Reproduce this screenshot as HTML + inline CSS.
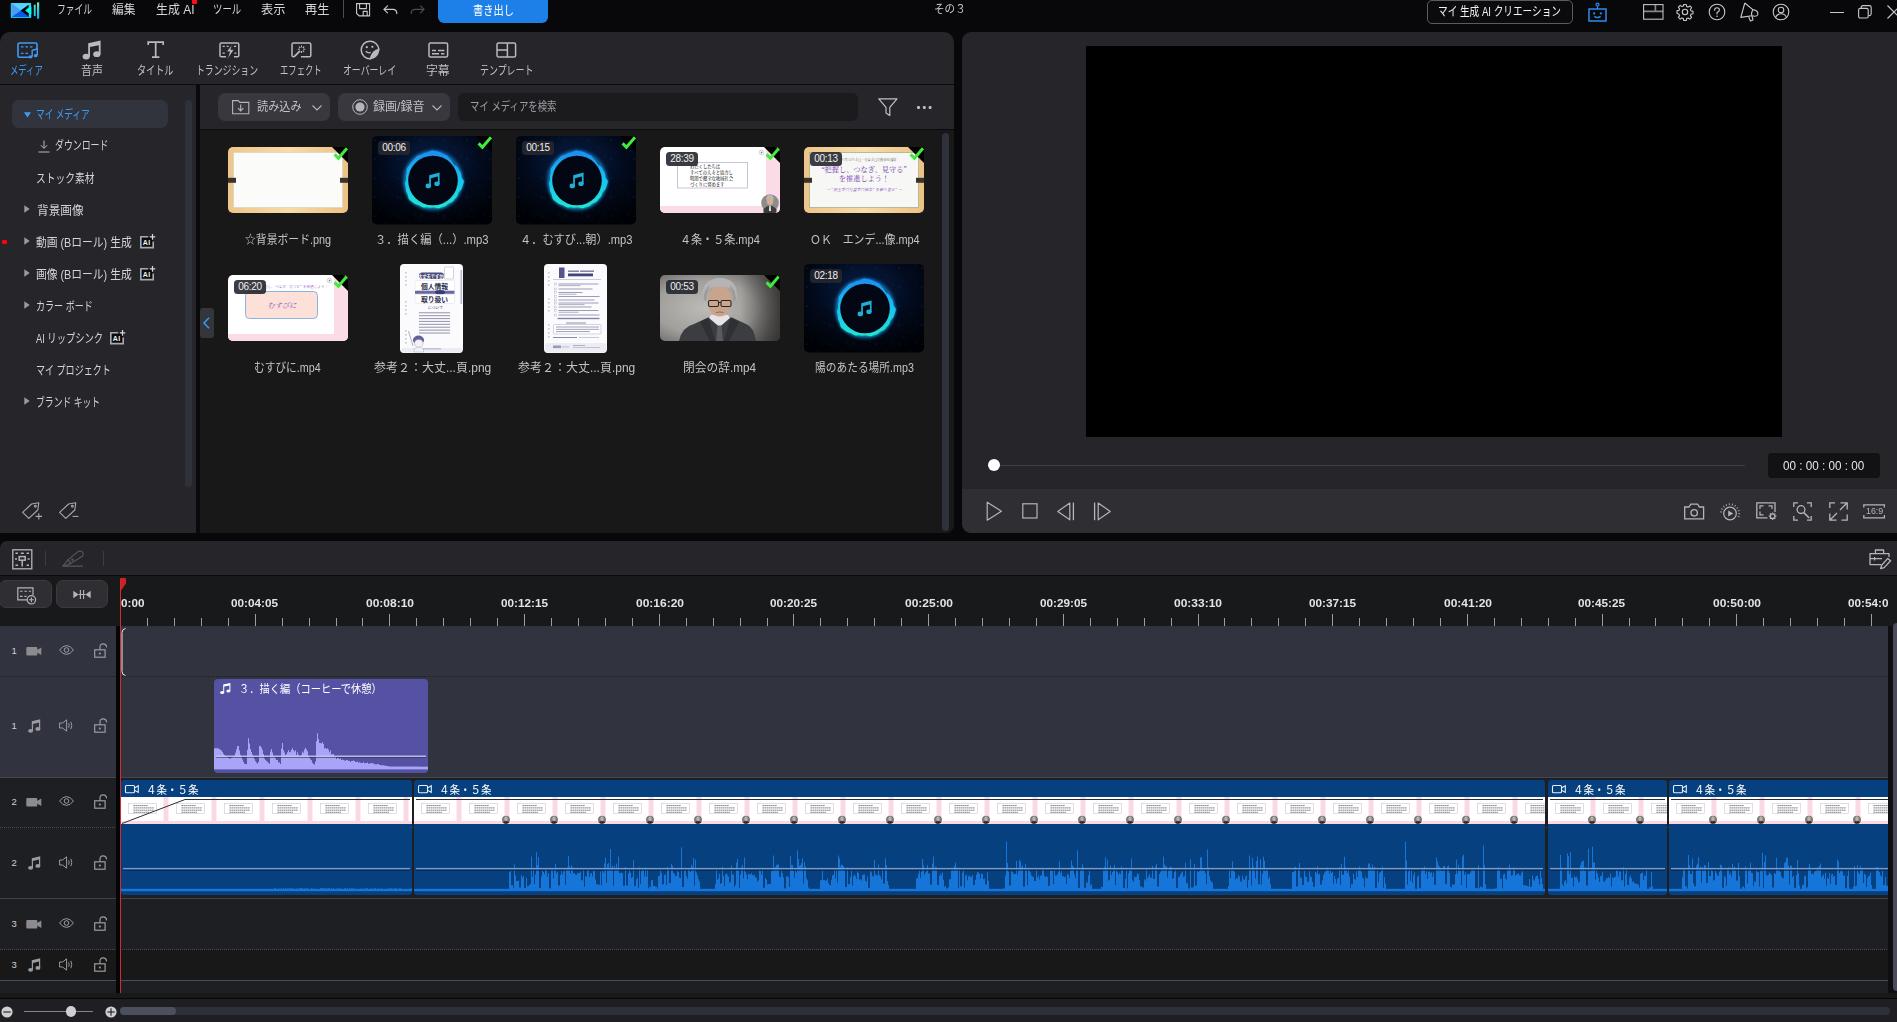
<!DOCTYPE html>
<html lang="ja">
<head>
<meta charset="utf-8">
<title>その3</title>
<style>
*{box-sizing:border-box;margin:0;padding:0}
html,body{width:1897px;height:1022px;overflow:hidden;background:#08080b}
body{font-family:"Liberation Sans","Noto Sans CJK JP",sans-serif;color:#d0d0d4;font-size:12px;position:relative}
.abs{position:absolute}
.t{position:absolute;white-space:nowrap;line-height:1;transform-origin:0 50%}
svg{position:absolute;overflow:visible}
/* ---------- top bar ---------- */
#top{position:absolute;left:0;top:0;width:1897px;height:32px;background:#08080b}
#top .m{position:absolute;top:3px;font-size:12.5px;color:#d6d6da;white-space:nowrap;line-height:14px;transform-origin:0 50%}
#export{position:absolute;left:438px;top:0;width:110px;height:23px;background:#1d80e8;border-radius:0 0 6px 6px;color:#fff;font-size:12.5px;text-align:center;line-height:21px}
#aibtn{position:absolute;left:1427px;top:0px;width:146px;height:24px;border:1px solid #5a5a60;border-radius:5px;background:#0b0b0d;color:#f0f0f2;font-size:12.5px;text-align:center;line-height:22px;white-space:nowrap}
/* ---------- left panel ---------- */
#lp{position:absolute;left:0;top:32px;width:954px;height:501px;background:#25252a;border-radius:10px 10px 8px 0;overflow:hidden}
#lp .hline{position:absolute;left:0;top:52px;width:954px;height:1px;background:#0b0b0d}
#side{position:absolute;left:0;top:53px;width:196px;height:448px;background:#25252a}
#gap{position:absolute;left:196px;top:53px;width:4px;height:448px;background:#0a0a0d}
#mtool{position:absolute;left:200px;top:53px;width:754px;height:44px;background:#25252a}
#mline{position:absolute;left:200px;top:97px;width:754px;height:1px;background:#0b0b0d}
#grid{position:absolute;left:200px;top:98px;width:754px;height:403px;background:#181818}
.tab{position:absolute;top:0;height:52px}
.tab .lb{position:absolute;top:32px;font-size:12px;color:#c9c9ce;white-space:nowrap;line-height:14px;transform-origin:50% 50%}
.si{position:absolute;font-size:12.5px;color:#d4d4d8;white-space:nowrap;line-height:16px;transform-origin:0 50%}
.btn{position:absolute;top:8px;height:28px;border-radius:7px;background:#38383e}
.cap{position:absolute;font-size:12px;color:#c4c4c9;white-space:nowrap;line-height:14px;text-align:center;width:144px}
.th{position:absolute;overflow:hidden}
.dur{position:absolute;height:14px;width:32px;border-radius:3.5px;background:rgba(38,39,45,.9);color:#f0f0f4;font-size:10px;line-height:14px;text-align:center;letter-spacing:-.3px}
/* ---------- right panel ---------- */
#rp{position:absolute;left:962px;top:32px;width:935px;height:501px;background:#25252a;border-radius:9px 0 0 9px;overflow:hidden}
#video{position:absolute;left:124px;top:14px;width:696px;height:391px;background:#000}
#ctl{position:absolute;left:0;top:457px;width:935px;height:44px;background:#2e2e33}
#tc{position:absolute;left:806px;top:421px;width:112px;height:25px;border-radius:4px;background:#121214;color:#e4e4e8;font-size:11.5px;text-align:center;line-height:25px}
/* ---------- timeline ---------- */
#tl{position:absolute;left:0;top:541px;width:1897px;height:481px;background:#18191a;border-radius:7px 0 0 0;overflow:hidden}
#tlbar{position:absolute;left:0;top:0;width:1897px;height:34px;background:#25252a}
#tlline{position:absolute;left:0;top:34px;width:1897px;height:1px;background:#0b0b0d}
.hb{position:absolute;top:39px;height:28px;border-radius:7px;background:#2e2e33;border:1px solid #3a3a40}
.rl{position:absolute;top:56px;font-size:11px;font-weight:bold;color:#e2e2e4;white-space:nowrap;line-height:12px;transform:translateX(-50%)}
.trk{position:absolute;left:0;width:1888px}
.hd{position:absolute;left:0;width:116px}
.num{position:absolute;left:11px;font-size:9.5px;color:#d8d8dc;line-height:10px}
</style>
</head>
<body>
<div id="top">
  <!-- logo -->
  <svg style="left:10px;top:2px" width="30" height="18" viewBox="0 0 30 18">
    <defs><linearGradient id="lg1" x1="0" y1="0" x2="0" y2="1"><stop offset="0" stop-color="#4ee8c0"/><stop offset="1" stop-color="#16c4f2"/></linearGradient>
    <linearGradient id="lg2" x1="0" y1="0" x2="0" y2="1"><stop offset="0" stop-color="#84eaa0"/><stop offset=".5" stop-color="#22cfd8"/><stop offset="1" stop-color="#18a4f2"/></linearGradient></defs>
    <rect x="0.800" y="1" width="20.300" height="14.900" fill="#22d8ec"/>
    <polygon points="1.600,1.600 20.600,1.600 11,8.600" fill="#58d2fb"/>
    <polygon points="1.600,1.600 11,8.600 1.600,15" fill="#469ff4"/>
    <polygon points="1.600,15 11,8.600 20.600,15" fill="#0557ee"/>
    <polygon points="10.600,8.600 18.600,2.800 18.600,5.600 15.200,8.600 19,11.600 19,14.800" fill="#030305"/>
    <polygon points="15.600,8.600 21.400,4.600 21.400,12.400" fill="#00fbf0"/>
    <polygon points="18.800,11.400 21.100,12.200 21.100,15.600 18.800,14.600" fill="#20e8e8"/>
    <rect x="23.800" y="2.700" width="1.900" height="11.400" fill="url(#lg1)"/>
    <rect x="27" y="0.400" width="2.200" height="16.300" fill="url(#lg2)"/>
  </svg>
  <span class="m" style="transform:scaleX(0.7010);left:57.30px">ファイル</span>
  <span class="m" style="transform:scaleX(0.9412);left:112.00px">編集</span>
  <span class="m" style="transform:scaleX(0.9545);left:156.00px">生成 AI</span>
  <div class="abs" style="left:192px;top:0;width:5px;height:4px;background:#ff0a18;border-radius:0 0 1px 1px"></div>
  <span class="m" style="transform:scaleX(0.7500);left:213.25px">ツール</span>
  <span class="m" style="transform:scaleX(0.9796);left:261.00px">表示</span>
  <span class="m" style="transform:scaleX(0.9796);left:305.00px">再生</span>
  <div class="abs" style="left:343px;top:0;width:1px;height:18px;background:#4a4a50"></div>
  <!-- save -->
  <svg style="left:356px;top:3px" width="15" height="14" viewBox="0 0 15 14" fill="none" stroke="#c8c8cc" stroke-width="1.1">
    <path d="M0.6 0.6H13.6V12.9H3.2L0.6 10.5Z"/>
    <path d="M3.6 0.6V5.6H10.4V0.6"/>
    <path d="M7.2 12.9V8.4H11.2V12.9"/>
  </svg>
  <!-- undo -->
  <svg style="left:383px;top:5px" width="15" height="10" viewBox="0 0 15 10" fill="none" stroke="#c8c8cc" stroke-width="1.2" stroke-linecap="round" stroke-linejoin="round">
    <path d="M4.5 0.8L1 4.3L4.5 7.8"/><path d="M1.2 4.3H10Q13.8 4.3 13.8 8.6"/>
  </svg>
  <!-- redo -->
  <svg style="left:410px;top:5px" width="15" height="10" viewBox="0 0 15 10" fill="none" stroke="#4c4c52" stroke-width="1.2" stroke-linecap="round" stroke-linejoin="round">
    <path d="M10.5 0.8L14 4.3L10.5 7.8"/><path d="M13.8 4.3H5Q1.2 4.3 1.2 8.6"/>
  </svg>
  <div id="export"><span class="t" style="transform:scaleX(0.8182);left:35.00px;top:5px;font-size:12.5px;color:#fff">書き出し</span></div>
  <span class="t" style="transform:scaleX(0.9194);left:934.08px;top:4px;font-size:11.5px;color:#c8c8cc">その３</span>
  <div id="aibtn"><span class="t" style="transform:scaleX(0.7710);left:10.23px;top:5px;font-size:12.5px;color:#f2f2f4">マイ 生成 AI クリエーション</span></div>
  <!-- robot -->
  <svg style="left:1588px;top:2px" width="20" height="20" viewBox="0 0 20 20" fill="none" stroke="#2a8cf0" stroke-width="1.500">
    <rect x="1" y="7" width="17" height="12"/>
    <circle cx="9.500" cy="2.600" r="1.500" stroke-width="1.200"/>
    <path d="M9.500 4.200V7" stroke-width="1.200"/>
    <circle cx="6.200" cy="11.400" r="1.100" fill="#2a8cf0" stroke="none"/><circle cx="12.800" cy="11.400" r="1.100" fill="#2a8cf0" stroke="none"/>
    <path d="M6.300 14.400Q9.500 16.600 12.700 14.400" stroke-width="1.300"/>
  </svg>
  <!-- layout -->
  <svg style="left:1643px;top:4px" width="21" height="16" viewBox="0 0 21 16" fill="none" stroke="#c0c0c4" stroke-width="1.100">
    <path d="M0.600 7.400H20M12.400 0.600V7.400" stroke="#85858a" stroke-width="1.700"/><rect x="0.600" y="0.600" width="19.400" height="14.600"/>
  </svg>
  <!-- gear -->
  <svg style="left:1676px;top:3px" width="18" height="18" viewBox="0 0 24 24" fill="none" stroke="#c8c8cc" stroke-width="1.5" stroke-linejoin="round">
    <circle cx="12" cy="12" r="3.6"/>
    <path d="M10.3 2h3.4l.5 2.7 1.9.8 2.3-1.6 2.4 2.4-1.6 2.3.8 1.9 2.7.5v3.4l-2.7.5-.8 1.9 1.6 2.3-2.4 2.4-2.3-1.6-1.9.8-.5 2.7h-3.4l-.5-2.7-1.9-.8-2.3 1.6-2.4-2.4 1.6-2.3-.8-1.9L1.3 13.700V10.300l2.700-.5.8-1.900-1.600-2.300 2.400-2.400 2.300 1.600 1.900-.8z"/>
  </svg>
  <!-- help -->
  <svg style="left:1708px;top:3px" width="18" height="18" viewBox="0 0 18 18" fill="none" stroke="#c8c8cc" stroke-width="1.1">
    <circle cx="9" cy="9" r="7.8"/><path d="M6.6 7.2Q6.6 4.8 9 4.8Q11.4 4.8 11.4 7Q11.4 8.4 9 9.6V11" stroke-linecap="round"/><circle cx="9" cy="13.2" r=".8" fill="#c8c8cc" stroke="none"/>
  </svg>
  <!-- megaphone -->
  <svg style="left:1740px;top:2px" width="20" height="20" viewBox="0 0 20 20" fill="none" stroke="#c8c8cc" stroke-width="1.100" stroke-linejoin="round">
    <path d="M4.800 1L0.800 15.400L11.800 13.800"/><path d="M4.800 1L12.800 7.600"/>
    <path d="M12.800 7.600Q18.600 8.400 17.800 12.600Q16.800 15 11.800 13.800Q11 10.600 12.800 7.600Z"/>
    <path d="M8.600 14.600L10.400 19L13 18L12 14"/>
  </svg>
  <!-- user -->
  <svg style="left:1772px;top:3px" width="18" height="18" viewBox="0 0 18 18" fill="none" stroke="#c8c8cc" stroke-width="1.1">
    <circle cx="9" cy="9" r="7.8"/><circle cx="9" cy="7" r="2.8"/><path d="M3.6 14.4Q5 10.8 9 10.8Q13 10.8 14.4 14.4"/>
  </svg>
  <div class="abs" style="left:1830px;top:11.5px;width:14px;height:1.3px;background:#c8c8cc"></div>
  <svg style="left:1858px;top:5px" width="14" height="14" viewBox="0 0 14 14" fill="none" stroke="#c8c8cc" stroke-width="1.1">
    <rect x="0.6" y="3.4" width="9.6" height="9.6" rx="1.6"/><path d="M3.2 3.2V2.4Q3.2 0.6 5 0.6H11.4Q13.2 0.6 13.2 2.4V8.8Q13.2 10.6 11.4 10.6H10.4"/>
  </svg>
  <svg style="left:1887px;top:5px" width="14" height="14" viewBox="0 0 14 14" fill="none" stroke="#c8c8cc" stroke-width="1.2"><path d="M0.5 0.5L13.5 13.5M13.5 0.5L0.5 13.5"/></svg>
</div>

<div id="lp">
  <!-- tabs -->
  <div class="tab" style="left:0;width:56px">
    <svg style="left:17px;top:10px" width="22" height="18" viewBox="0 0 22 18" fill="none" stroke="#3d9df6" stroke-width="1.6">
      <path d="M12 15.2H2.4Q1 15.2 1 13.8V2.400Q1 1 2.400 1H18.600Q20 1 20 2.400V7"/>
      <path d="M4 4.800H6.500M8.500 4.800H11M13 4.800H15.500M4 11.400H6.500M8.500 11.400H11" stroke-width="1.3"/>
      <path d="M15.200 14.500V8.200L20.300 7V13.300" stroke-width="1.4"/>
      <ellipse cx="13.600" cy="14.800" rx="1.900" ry="1.600" fill="#3d9df6" stroke="none"/><ellipse cx="18.700" cy="13.700" rx="1.900" ry="1.600" fill="#3d9df6" stroke="none"/>
    </svg>
    <span class="t" style="transform:scaleX(0.6957);left:10.30px;top:33px;font-size:12px;color:#3d9df6">メディア</span>
  </div>
  <div class="tab" style="left:64px;width:56px">
    <svg style="left:18px;top:8px" width="20" height="20" viewBox="0 0 20 20" fill="#b9b9c1">
      <path d="M6.200 3.200L18.600 0.600V14.200H16.800V5.200L8 7V16.600H6.200Z"/>
      <ellipse cx="4.200" cy="16.600" rx="3.600" ry="2.900"/><ellipse cx="14.800" cy="14.200" rx="3.600" ry="2.900"/>
    </svg>
    <span class="t" style="transform:scaleX(0.9167);left:17.00px;top:33px;font-size:12px;color:#c0c0c8">音声</span>
  </div>
  <div class="tab" style="left:128px;width:56px">
    <svg style="left:19px;top:9px" width="18" height="18" viewBox="0 0 18 18" fill="none" stroke="#b9b9c1" stroke-width="1.7">
      <path d="M1.200 4V1.200H16.200V4M8.700 1.200V16M5 16.200H12.400"/>
    </svg>
    <span class="t" style="transform:scaleX(0.7596);left:9.24px;top:33px;font-size:12px;color:#c0c0c8">タイトル</span>
  </div>
  <div class="tab" style="left:192px;width:72px">
    <svg style="left:27px;top:10px" width="21" height="17" viewBox="0 0 21 17" fill="none" stroke="#b9b9c1" stroke-width="1.5">
      <path d="M7 14.800H2.400Q1 14.800 1 13.400V2.400Q1 1 2.400 1H18.400Q19.800 1 19.800 2.400V13.400Q19.800 14.800 18.400 14.800H15"/>
      <path d="M3.600 4.300H5.800M7.600 4.300H9.600M15 4.300H17.200M3.600 11.200H5.800M15.400 11.200H17.400" stroke-width="1.200"/>
      <path d="M13.400 2L7.400 9.800H10.600L8 18L15.200 7.600H11.800Z" fill="#b9b9c1" stroke="#25252a" stroke-width=".8"/>
    </svg>
    <span class="t" style="transform:scaleX(0.7383);left:4.29px;top:33px;font-size:12px;color:#c0c0c8">トランジション</span>
  </div>
  <div class="tab" style="left:272px;width:60px">
    <svg style="left:19px;top:10px" width="21" height="17" viewBox="0 0 21 17" fill="none" stroke="#b9b9c1" stroke-width="1.5">
      <path d="M3 14.800H2.400Q1 14.800 1 13.400V2.400Q1 1 2.400 1H18.400Q19.800 1 19.800 2.400V13.400Q19.800 14.800 18.400 14.800H10"/>
      <path d="M3 14.800L9 8.800" stroke-width="1.800"/>
      <path d="M10.500 3.600V5.600M10.500 9V11M6.800 7.300H8.800M12.200 7.300H14.200M7.900 4.700L9.200 6M11.800 8.600L13.100 9.900M13.100 4.700L11.800 6" stroke-width="1.100"/>
    </svg>
    <span class="t" style="transform:scaleX(0.6948);left:8.01px;top:33px;font-size:12px;color:#c0c0c8">エフェクト</span>
  </div>
  <div class="tab" style="left:336px;width:66px">
    <svg style="left:24px;top:8px" width="20" height="20" viewBox="0 0 20 20" fill="none" stroke="#b9b9c1" stroke-width="1.5">
      <path d="M18.800 9.600A8.800 8.800 0 1 0 10.400 18.800"/>
      <path d="M18.800 9.600Q13 10.400 10.400 18.800Q17.600 17.600 18.800 9.600Z" fill="#b9b9c1"/>
      <circle cx="6.800" cy="7.200" r="1.100" fill="#b9b9c1" stroke="none"/><circle cx="12.400" cy="6.800" r="1.100" fill="#b9b9c1" stroke="none"/>
      <path d="M5.800 11.200Q8 13.600 10.800 12.400" stroke-width="1.300"/>
    </svg>
    <span class="t" style="transform:scaleX(0.7386);left:6.56px;top:33px;font-size:12px;color:#c0c0c8">オーバーレイ</span>
  </div>
  <div class="tab" style="left:410px;width:56px">
    <svg style="left:18px;top:10px" width="21" height="17" viewBox="0 0 21 17" fill="none" stroke="#b9b9c1" stroke-width="1.500">
      <rect x="1" y="1" width="18.600" height="14" rx="1.600"/>
      <path d="M4 8.600H8M10 8.600H16.400M4 11.800H11M13 11.800H16.400" stroke-width="1.500"/>
    </svg>
    <span class="t" style="transform:scaleX(0.9833);left:16.30px;top:33px;font-size:12px;color:#c0c0c8">字幕</span>
  </div>
  <div class="tab" style="left:474px;width:66px">
    <svg style="left:22px;top:10px" width="21" height="17" viewBox="0 0 21 17" fill="none" stroke="#b9b9c1" stroke-width="1.500">
      <rect x="1" y="1" width="18.600" height="14" rx="1.600"/><path d="M1 8H11.400M11.400 1V15"/>
    </svg>
    <span class="t" style="transform:scaleX(0.7457);left:5.55px;top:33px;font-size:12px;color:#c0c0c8">テンプレート</span>
  </div>
  <div class="hline"></div>
  <!-- sidebar -->
  <div id="side">
    <div class="abs" style="left:12px;top:15px;width:156px;height:28px;border-radius:7px;background:#32343d"></div>
    <svg style="left:23.500px;top:27px" width="7" height="6" viewBox="0 0 7 6"><path d="M0 0.300H7L3.500 5.600Z" fill="#3d9df6"/></svg>
    <span class="si" style="transform:scaleX(0.6924);left:35.61px;top:21.5px;color:#3d9df6">マイ メディア</span>
    <svg style="left:38px;top:55px" width="12" height="13" viewBox="0 0 12 13" fill="none" stroke="#b9b9c1" stroke-width="1"><path d="M6 0.500V8M2.800 5.200L6 8.400L9.200 5.200M0.500 12H11.500"/></svg>
    <span class="si" style="transform:scaleX(0.7116);left:55.40px;top:53px">ダウンロード</span>
    <span class="si" style="transform:scaleX(0.7796);left:35.52px;top:85.5px">ストック素材</span>
    <svg style="left:24px;top:120px" width="6" height="8" viewBox="0 0 6 8"><path d="M0.300 0.300L5.700 4L0.300 7.700Z" fill="#9a9aa2"/></svg>
    <span class="si" style="transform:scaleX(0.9307);left:36.60px;top:117.5px">背景画像</span>
    <div class="abs" style="left:2px;top:155px;width:4.500px;height:4px;background:#ff0010;border-radius:1px"></div>
    <svg style="left:24px;top:152px" width="6" height="8" viewBox="0 0 6 8"><path d="M0.300 0.300L5.700 4L0.300 7.700Z" fill="#9a9aa2"/></svg>
    <span class="si" style="transform:scaleX(0.8616);left:36.30px;top:149.5px">動画 (Bロール) 生成</span>
    <svg class="ai" style="left:140px;top:149px" width="16" height="15" viewBox="0 0 16 15" fill="none" stroke="#a9a9b1" stroke-width="1.600"><rect x="1.500" y="3.400" width="11.400" height="10" fill="#0b0b0d" stroke="none"/><path d="M8.200 2.800H0.800V13.600H13.200V7.600"/><path d="M12.500 0V5.800M9.800 2.900H15.200" stroke="#d8d8de" stroke-width="1.200"/></svg>
    <span class="t" style="left:142.800px;top:153.7px;font-size:7px;font-weight:bold;letter-spacing:.5px;color:#f0f0f4">AI</span>
    <svg style="left:24px;top:184px" width="6" height="8" viewBox="0 0 6 8"><path d="M0.300 0.300L5.700 4L0.300 7.700Z" fill="#9a9aa2"/></svg>
    <span class="si" style="transform:scaleX(0.8616);left:36.30px;top:181.5px">画像 (Bロール) 生成</span>
    <svg class="ai" style="left:140px;top:181px" width="16" height="15" viewBox="0 0 16 15" fill="none" stroke="#a9a9b1" stroke-width="1.600"><rect x="1.500" y="3.400" width="11.400" height="10" fill="#0b0b0d" stroke="none"/><path d="M8.200 2.800H0.800V13.600H13.200V7.600"/><path d="M12.500 0V5.800M9.800 2.900H15.200" stroke="#d8d8de" stroke-width="1.200"/></svg>
    <span class="t" style="left:142.800px;top:185.7px;font-size:7px;font-weight:bold;letter-spacing:.5px;color:#f0f0f4">AI</span>
    <svg style="left:24px;top:216px" width="6" height="8" viewBox="0 0 6 8"><path d="M0.300 0.300L5.700 4L0.300 7.700Z" fill="#9a9aa2"/></svg>
    <span class="si" style="transform:scaleX(0.7239);left:35.58px;top:213.5px">カラー ボード</span>
    <span class="si" style="transform:scaleX(0.7434);left:36.30px;top:245.5px">AI リップシンク</span>
    <svg class="ai" style="left:110px;top:245px" width="16" height="15" viewBox="0 0 16 15" fill="none" stroke="#a9a9b1" stroke-width="1.600"><rect x="1.500" y="3.400" width="11.400" height="10" fill="#0b0b0d" stroke="none"/><path d="M8.200 2.800H0.800V13.600H13.200V7.600"/><path d="M12.500 0V5.800M9.800 2.900H15.200" stroke="#d8d8de" stroke-width="1.200"/></svg>
    <span class="t" style="left:112.800px;top:249.7px;font-size:7px;font-weight:bold;letter-spacing:.5px;color:#f0f0f4">AI</span>
    <span class="si" style="transform:scaleX(0.7230);left:35.58px;top:277.5px">マイ プロジェクト</span>
    <svg style="left:24px;top:312px" width="6" height="8" viewBox="0 0 6 8"><path d="M0.300 0.300L5.700 4L0.300 7.700Z" fill="#9a9aa2"/></svg>
    <span class="si" style="transform:scaleX(0.7053);left:35.59px;top:309.5px">ブランド キット</span>
    <div class="abs" style="left:184.500px;top:15px;width:7px;height:387px;border-radius:4px;background:#2f313a"></div>
    <!-- tags -->
    <svg style="left:22px;top:417px" width="21" height="19" viewBox="0 0 21 19" fill="none" stroke="#a8a8b0" stroke-width="1.100" stroke-linejoin="round"><path d="M0.600 10.400L9.600 2L16.800 0.800L15.800 8L6.800 16.400Z"/><circle cx="13.400" cy="4.200" r="0.900"/><path d="M16.800 11.200V17.600M13.600 14.400H20"/></svg>
    <svg style="left:59px;top:417px" width="21" height="19" viewBox="0 0 21 19" fill="none" stroke="#a8a8b0" stroke-width="1.100" stroke-linejoin="round"><path d="M0.600 10.400L9.600 2L16.800 0.800L15.800 8L6.800 16.400Z"/><circle cx="13.400" cy="4.200" r="0.900"/><path d="M13.600 14.400H19.400"/></svg>
  </div>
  <div id="gap"></div>
  <!-- media toolbar -->
  <div id="mtool">
    <div class="btn" style="left:18px;width:112px">
      <svg style="left:13.500px;top:7px" width="18" height="15" viewBox="0 0 18 15" fill="none" stroke="#b4b4bc" stroke-width="1.100"><path d="M0.600 0.600H6.200L7.800 2.400H16.800V13.800H0.600Z"/><path d="M8.700 4.600V10.600M6 8.200L8.700 10.900L11.400 8.200"/></svg>
      <span class="t" style="transform:scaleX(0.9292);left:38.60px;top:8px;font-size:12px;color:#c0c0c8">読み込み</span>
      <svg style="left:93.500px;top:12px" width="10" height="6" viewBox="0 0 10 6" fill="none" stroke="#b4b4bc" stroke-width="1.100"><path d="M0.500 0.500L5 5L9.500 0.500"/></svg>
    </div>
    <div class="btn" style="left:138px;width:112px">
      <svg style="left:14px;top:6px" width="16" height="16" viewBox="0 0 16 16"><circle cx="8" cy="8" r="7.300" fill="none" stroke="#b4b4bc" stroke-width="1"/><circle cx="8" cy="8" r="4.600" fill="#b4b4bc"/></svg>
      <span class="t" style="transform:scaleX(1.0032);left:34.60px;top:8px;font-size:12px;color:#c0c0c8">録画/録音</span>
      <svg style="left:94px;top:12px" width="10" height="6" viewBox="0 0 10 6" fill="none" stroke="#b4b4bc" stroke-width="1.100"><path d="M0.500 0.500L5 5L9.500 0.500"/></svg>
    </div>
    <div class="abs" style="left:258px;top:8px;width:400px;height:28px;border-radius:6px;background:#1b1b1e">
      <span class="t" style="transform:scaleX(0.7822);left:11.62px;top:8px;font-size:12px;color:#9c9ca4">マイ メディアを検索</span>
    </div>
    <svg style="left:678px;top:13px" width="20" height="19" viewBox="0 0 20 19" fill="none" stroke="#c0c0c8" stroke-width="1.200" stroke-linejoin="round"><path d="M0.800 0.800H19L11.800 9.400V17.600L8 15V9.400Z"/></svg>
    <div class="abs" style="left:717px;top:21px;width:2.600px;height:2.600px;border-radius:50%;background:#c0c0c8;box-shadow:5.800px 0 0 #c0c0c8,11.600px 0 0 #c0c0c8"></div>
  </div>
  <div id="mline"></div>

  <div id="grid">
    <svg width="0" height="0" style="left:0;top:0">
      <defs>
        <radialGradient id="mbg" cx="50%" cy="30%" r="75%"><stop offset="0" stop-color="#06204a"/><stop offset=".55" stop-color="#020a1c"/><stop offset="1" stop-color="#000104"/></radialGradient>
        <linearGradient id="ring" x1="0" y1="0" x2="0" y2="1"><stop offset="0" stop-color="#1b8df2"/><stop offset=".5" stop-color="#19c3ee"/><stop offset="1" stop-color="#1fe6d6"/></linearGradient>
        <radialGradient id="ringglow" cx="50%" cy="50%" r="50%"><stop offset=".72" stop-color="#0b4a8c" stop-opacity="0"/><stop offset=".86" stop-color="#1590d8" stop-opacity=".55"/><stop offset="1" stop-color="#0b4a8c" stop-opacity="0"/></radialGradient>
        <pattern id="stars" width="23" height="19" patternUnits="userSpaceOnUse"><circle cx="3" cy="4" r=".5" fill="#1b5fa8"/><circle cx="14" cy="11" r=".45" fill="#17508e"/><circle cx="20" cy="2" r=".4" fill="#1a6ab0"/><circle cx="8" cy="16" r=".4" fill="#134680"/></pattern>
        <filter id="gl" x="-20%" y="-20%" width="140%" height="140%"><feGaussianBlur stdDeviation="1.6"/></filter>
        <g id="music">
          <rect width="120" height="88.500" rx="5" fill="url(#mbg)"/>
          <rect width="120" height="88" rx="5" fill="url(#stars)" opacity=".6"/>
          <circle cx="61" cy="44.500" r="33" fill="url(#ringglow)"/>
          <path d="M91.7 44.5 L91.7 46.6 L90.9 48.7 L90.2 50.7 L89.5 52.7 L88.2 54.4 L86.8 56.0 L86.0 57.8 L85.3 59.7 L84.2 61.4 L82.8 62.8 L81.6 64.4 L80.2 65.8 L78.4 66.7 L76.6 67.6 L75.0 68.8 L73.5 70.1 L71.6 70.8 L69.7 71.3 L67.8 71.9 L65.9 72.2 L63.9 71.8 L61.9 71.4 L60.1 71.6 L58.1 71.8 L56.2 71.6 L54.3 71.3 L52.3 71.4 L50.3 71.0 L48.6 69.9 L46.8 69.0 L44.8 68.5 L42.8 67.8 L41.1 66.6 L39.5 65.3 L37.7 64.0 L36.6 62.3 L36.1 60.1 L35.5 58.1 L34.7 56.2 L34.1 54.3 L34.0 52.2 L33.6 50.3 L33.1 48.4 L33.2 46.4 L33.9 44.5 L34.1 42.6 L34.0 40.7 L34.2 38.8 L34.7 36.9 L34.7 34.9 L34.9 32.9 L35.8 31.1 L37.2 29.6 L38.2 28.0 L39.3 26.3 L40.7 24.9 L42.2 23.6 L43.4 22.0 L44.8 20.5 L46.6 19.6 L48.6 19.0 L50.4 18.2 L52.2 17.3 L54.1 16.8 L56.0 16.3 L57.9 15.3 L60.0 14.6 L62.0 14.8 L64.1 15.3 L66.1 15.6 L68.0 16.2 L69.8 17.3 L71.6 18.3 L73.5 18.9 L75.2 19.8 L76.6 21.4 L77.8 23.0 L79.2 24.3 L80.3 25.9 L81.2 27.5 L82.5 28.9 L84.2 30.0 L85.6 31.4 L86.5 33.1 L87.5 34.8 L88.6 36.6 L89.1 38.5 L89.3 40.5 L89.9 42.5Z" fill="url(#ring)" filter="url(#gl)" opacity=".7"/><path d="M91.7 44.5 L91.7 46.6 L90.9 48.7 L90.2 50.7 L89.5 52.7 L88.2 54.4 L86.8 56.0 L86.0 57.8 L85.3 59.7 L84.2 61.4 L82.8 62.8 L81.6 64.4 L80.2 65.8 L78.4 66.7 L76.6 67.6 L75.0 68.8 L73.5 70.1 L71.6 70.8 L69.7 71.3 L67.8 71.9 L65.9 72.2 L63.9 71.8 L61.9 71.4 L60.1 71.6 L58.1 71.8 L56.2 71.6 L54.3 71.3 L52.3 71.4 L50.3 71.0 L48.6 69.9 L46.8 69.0 L44.8 68.5 L42.8 67.8 L41.1 66.6 L39.5 65.3 L37.7 64.0 L36.6 62.3 L36.1 60.1 L35.5 58.1 L34.7 56.2 L34.1 54.3 L34.0 52.2 L33.6 50.3 L33.1 48.4 L33.2 46.4 L33.9 44.5 L34.1 42.6 L34.0 40.7 L34.2 38.8 L34.7 36.9 L34.7 34.9 L34.9 32.9 L35.8 31.1 L37.2 29.6 L38.2 28.0 L39.3 26.3 L40.7 24.9 L42.2 23.6 L43.4 22.0 L44.8 20.5 L46.6 19.6 L48.6 19.0 L50.4 18.2 L52.2 17.3 L54.1 16.8 L56.0 16.3 L57.9 15.3 L60.0 14.6 L62.0 14.8 L64.1 15.3 L66.1 15.6 L68.0 16.2 L69.8 17.3 L71.6 18.3 L73.5 18.9 L75.2 19.8 L76.6 21.4 L77.8 23.0 L79.2 24.3 L80.3 25.9 L81.2 27.5 L82.5 28.9 L84.2 30.0 L85.6 31.4 L86.5 33.1 L87.5 34.8 L88.6 36.6 L89.1 38.5 L89.3 40.5 L89.9 42.5Z" fill="url(#ring)"/>
          <circle cx="61" cy="44.500" r="24.800" fill="#020713"/>
          <g fill="#1fb0d6"><path d="M57.200 39.200L67.600 36.600V47.800H65.900V40.500L58.900 42.200V50H57.200Z"/><ellipse cx="56.300" cy="49.900" rx="2.700" ry="2.300"/><ellipse cx="65" cy="47.700" rx="2.700" ry="2.300"/></g>
        </g>
        <g id="chk">
          <path d="M-1 0H15V16Z" fill="#000"/>
          <path d="M1.600 7.400L5.400 11.200L14 1.200" fill="none" stroke="#41ea3c" stroke-width="3"/>
        </g>
        <radialGradient id="manbg" cx="38%" cy="50%" r="75%"><stop offset="0" stop-color="#bcbbb8"/><stop offset=".55" stop-color="#a09f9c"/><stop offset="1" stop-color="#5a5957"/></radialGradient>
        <linearGradient id="mansh" x1="0" y1="0" x2="1" y2="0"><stop offset="0" stop-color="#2a2928" stop-opacity="0"/><stop offset="1" stop-color="#2a2928" stop-opacity=".75"/></linearGradient>
        <linearGradient id="wood" x1="0" y1="0" x2="1" y2="0"><stop offset="0" stop-color="#eec58a"/><stop offset=".5" stop-color="#f8dba8"/><stop offset="1" stop-color="#ecc184"/></linearGradient>
      </defs>
    </svg>
    <!-- ===== row 1 ===== -->
    <!-- 1 board -->
    <svg style="left:28px;top:17px" width="120" height="66" viewBox="0 0 120 66">
      <rect width="120" height="66" rx="5" fill="url(#wood)"/>
      <rect x="5.500" y="5.500" width="109" height="55" fill="#fbfbfa" stroke="#d9d8c4" stroke-width=".8"/>
      <rect x="0" y="30.800" width="8" height="5" fill="#3a332c"/><rect x="112" y="30.800" width="8" height="5" fill="#3a332c"/>
      <use href="#chk" x="105" y="0"/>
    </svg>
    <!-- 2,3 music -->
    <svg style="left:172px;top:6px" width="120" height="88.500" viewBox="0 0 120 88.500"><use href="#music"/><use href="#chk" x="105" y="0"/></svg>
    <div class="dur" style="left:178px;top:11px">00:06</div>
    <svg style="left:316px;top:6px" width="120" height="88.500" viewBox="0 0 120 88.500"><use href="#music"/><use href="#chk" x="105" y="0"/></svg>
    <div class="dur" style="left:322px;top:11px">00:15</div>
    <!-- 4 slide -->
    <svg style="left:460px;top:17px" width="120" height="66" viewBox="0 0 120 66" font-family="'Liberation Serif','Noto Serif CJK JP',serif">
      <clipPath id="c4"><rect width="120" height="66" rx="5"/></clipPath>
      <g clip-path="url(#c4)">
        <rect width="120" height="66" fill="#fff"/>
        <rect x="106" y="0" width="14" height="66" fill="#fbdce6"/><rect x="0" y="59" width="120" height="7" fill="#fbdce6"/>
        <rect x="17.500" y="15.500" width="70" height="25.500" fill="#fff" stroke="#b9a3cf" stroke-width=".7"/>
        <g font-size="4.300" fill="#2a2a2a" font-weight="600">
          <text x="30" y="20.800">わたくしたちは</text><text x="30" y="27">すべての人々と協力し</text><text x="30" y="33.200">明朗で健全な地域社会</text><text x="30" y="39.300">づくりに努めます</text>
        </g>
        <circle cx="101.500" cy="5.500" r="2.300" fill="none" stroke="#b8c6d8" stroke-width=".7"/><circle cx="101.500" cy="5.500" r=".9" fill="#8a8a92"/>
        <circle cx="110" cy="56" r="8.800" fill="#8d8c89"/>
        <path d="M103.500 62Q110 55 116.500 62V66H103.500Z" fill="#3b3c3f"/><ellipse cx="110" cy="54" rx="3.300" ry="4" fill="#d2ae97"/><path d="M106.200 53Q106 48 110 48Q114 48 113.800 53Q112 50.500 110 50.500Q108 50.500 106.200 53Z" fill="#b9b9b9"/><path d="M109.300 58.500H110.700L111 64H109Z" fill="#ececec"/>
        <use href="#chk" x="105" y="0"/>
      </g>
    </svg>
    <div class="dur" style="left:466px;top:22px">28:39</div>
    <!-- 5 board with text -->
    <svg style="left:604px;top:17px" width="120" height="66" viewBox="0 0 120 66" font-family="'Liberation Serif','Noto Serif CJK JP',serif">
      <rect width="120" height="66" rx="5" fill="url(#wood)"/>
      <rect x="5.500" y="5.500" width="109" height="55" fill="#f7f7f5" stroke="#9fb48a" stroke-width=".8"/>
      <rect x="0" y="30.800" width="8" height="5" fill="#3a332c"/><rect x="112" y="30.800" width="8" height="5" fill="#3a332c"/>
      <text x="60" y="13.500" font-size="3.200" fill="#555" text-anchor="middle">令和６年度 民生委員・児童委員活動強化週間</text>
      <text x="60" y="25.200" font-size="7.200" fill="#6f35ac" text-anchor="middle">“把握し、つなぎ、見守る”</text>
      <text x="60" y="34.200" font-size="7.200" fill="#6f35ac" text-anchor="middle">を推進しよう！</text>
      <text x="60" y="44.300" font-size="3.900" fill="#8045b8" text-anchor="middle" font-style="italic">～ “民生委員児童委員信条” を振り返る” ～</text>
      <use href="#chk" x="105" y="0"/>
    </svg>
    <div class="dur" style="left:610px;top:22px">00:13</div>
    <!-- captions row1 -->
    <span class="t" style="transform:scaleX(0.9030);left:45.40px;top:103.500px;font-size:12px;color:#c2c2c8">☆背景ボード.png</span>
    <span class="t" style="transform:scaleX(0.9411);left:175.42px;top:103.500px;font-size:12px;color:#c2c2c8">３．描く編（...）.mp3</span>
    <span class="t" style="transform:scaleX(0.9327);left:319.73px;top:103.500px;font-size:12px;color:#c2c2c8">４．むすび...朝）.mp3</span>
    <span class="t" style="transform:scaleX(0.9211);left:480.16px;top:103.500px;font-size:12px;color:#c2c2c8">４条・５条.mp4</span>
    <span class="t" style="transform:scaleX(0.9083);left:609.79px;top:103.500px;font-size:12px;color:#c2c2c8">ＯＫ　エンデ...像.mp4</span>
    <!-- ===== row 2 ===== -->
    <!-- 6 musubini -->
    <svg style="left:28px;top:145px" width="120" height="66" viewBox="0 0 120 66" font-family="'Liberation Serif','Noto Serif CJK JP',serif">
      <clipPath id="c6"><rect width="120" height="66" rx="5"/></clipPath>
      <g clip-path="url(#c6)">
        <rect width="120" height="66" fill="#fff"/>
        <rect x="106" y="0" width="14" height="66" fill="#fbdce6"/><rect x="0" y="59" width="120" height="7" fill="#fbdce6"/>
        <text x="65" y="12.500" font-size="3.600" fill="#8a50c0" text-anchor="middle" font-style="italic">“把握し、つなぎ、見守る” を推進しよう！</text>
        <rect x="17.500" y="16.500" width="72" height="27" rx="4" fill="#fde1d8" stroke="#6aa6e6" stroke-width=".8"/>
        <text x="54" y="32.800" font-size="7.200" fill="#8648bd" text-anchor="middle" font-style="italic">むすびに</text>
        <circle cx="101.500" cy="5.500" r="2.300" fill="none" stroke="#b8c6d8" stroke-width=".7"/><circle cx="101.500" cy="5.500" r=".9" fill="#8a8a92"/>
        <use href="#chk" x="105" y="0"/>
      </g>
    </svg>
    <div class="dur" style="left:34px;top:150px">06:20</div>
    <!-- 7 doc 1 -->
    <svg style="left:200px;top:134px" width="63" height="89" viewBox="0 0 63 89" font-family="'Liberation Sans','Noto Sans CJK JP',sans-serif">
      <rect width="63" height="89" rx="4" fill="#fbfbfd"/>
      <rect x="1" y="84" width="61" height="4.500" rx="2" fill="#ececf4"/>
      <rect x="60.500" y="6" width="1.600" height="34" fill="#b8b8cc"/>
      <g fill="#c4c4d2"><rect x="5" y="8" width="1.600" height="1.600"/><rect x="5" y="12" width="1.600" height="1.600"/><rect x="5" y="16" width="1.600" height="1.600"/><rect x="5" y="20" width="1.600" height="1.600"/><rect x="5" y="37" width="1.600" height="1.600"/><rect x="5" y="41" width="1.600" height="1.600"/><rect x="5" y="45" width="1.600" height="1.600"/><rect x="5" y="49" width="1.600" height="1.600"/><rect x="5" y="66" width="1.600" height="1.600"/><rect x="5" y="70" width="1.600" height="1.600"/><rect x="5" y="74" width="1.600" height="1.600"/><rect x="5" y="78" width="1.600" height="1.600"/></g>
      <rect x="19" y="8.500" width="25" height="6.500" rx="3.200" fill="#4a4a7c"/>
      <text x="31.500" y="13.600" font-size="4.200" font-weight="bold" fill="#fff" text-anchor="middle">大丈夫ですか!</text>
      <rect x="44.500" y="3" width="9" height="12" rx="1" fill="#fff" stroke="#a8a8c0" stroke-width=".5"/>
      <rect x="15" y="16.500" width="39.500" height="10" rx="1" fill="#fff" stroke="#dcdce8" stroke-width=".5"/>
      <text x="34.500" y="24.800" font-size="6.800" font-weight="bold" fill="#2c2c4e" text-anchor="middle">個人情報</text>
      <rect x="15" y="26.800" width="39.500" height="3" fill="#6868a4"/>
      <ellipse cx="40" cy="28.300" rx="5" ry="2.300" fill="#3c3c74"/>
      <rect x="15" y="30.500" width="39.500" height="9" rx="1" fill="#fff" stroke="#dcdce8" stroke-width=".5"/>
      <text x="34.500" y="37.800" font-size="6.800" font-weight="bold" fill="#2c2c4e" text-anchor="middle">取り扱い</text>
      <text x="35.500" y="45" font-size="3.800" fill="#3c3c5c" text-anchor="middle">について</text>
      <g fill="#9c9cb4"><rect x="19" y="48.2" width="31" height="1.100"/><rect x="19" y="51.1" width="31" height="1.100"/><rect x="19" y="54.0" width="31" height="1.100"/><rect x="19" y="56.9" width="31" height="1.100"/><rect x="19" y="59.8" width="31" height="1.100"/><rect x="19" y="62.7" width="31" height="1.100"/><rect x="19" y="65.6" width="31" height="1.100"/><rect x="19" y="68.5" width="31" height="1.100"/></g>
      <path d="M8.500 67L13 82" stroke="#7878a0" stroke-width=".6"/>
      <ellipse cx="18.500" cy="76" rx="5.600" ry="4.400" fill="#62629a"/><ellipse cx="18.800" cy="79.300" rx="4.200" ry="3.800" fill="#f6f2f4" stroke="#8a8ab0" stroke-width=".4"/><path d="M14 84.500Q18.800 82 23.500 84.500V88H14Z" fill="#f2f2f8" stroke="#9a9ab8" stroke-width=".4"/>
      <rect x="23" y="84.500" width="18" height=".8" fill="#9a9ab8"/>
    </svg>
    <!-- 8 doc 2 -->
    <svg style="left:344px;top:134px" width="63" height="89" viewBox="0 0 63 89">
      <rect width="63" height="89" rx="4" fill="#fbfbfd"/>
      <rect x="1" y="79" width="61" height="9.500" rx="2" fill="#ececf4"/>
      <rect x="15" y="3.500" width="5.500" height="10.500" fill="#55558c"/>
      <rect x="24" y="6.500" width="11" height="1.400" fill="#77779c"/><rect x="36" y="6.500" width="14" height="1.400" fill="#77779c"/>
      <rect x="24" y="9.500" width="25" height="2.800" fill="#44447a"/>
      <rect x="9" y="15.200" width="48" height=".5" fill="#9a9ab4"/>
      <g fill="#c4c4d2"><rect x="4" y="8" width="1.600" height="1.600"/><rect x="4" y="12" width="1.600" height="1.600"/><rect x="4" y="16" width="1.600" height="1.600"/><rect x="4" y="20" width="1.600" height="1.600"/><rect x="4" y="34" width="1.600" height="1.600"/><rect x="4" y="38" width="1.600" height="1.600"/><rect x="4" y="42" width="1.600" height="1.600"/><rect x="4" y="46" width="1.600" height="1.600"/><rect x="4" y="60" width="1.600" height="1.600"/><rect x="4" y="64" width="1.600" height="1.600"/><rect x="4" y="68" width="1.600" height="1.600"/><rect x="4" y="72" width="1.600" height="1.600"/></g>
      <g fill="none" stroke="#a8a8c0" stroke-width=".4"><rect x="10.500" y="19" width="2" height="2"/><rect x="10.500" y="24" width="2" height="2"/><rect x="10.500" y="27.500" width="2" height="2"/><rect x="10.500" y="31.500" width="2" height="2"/><rect x="10.500" y="35" width="2" height="2"/><rect x="10.500" y="38" width="2" height="2"/><rect x="10.500" y="42" width="2" height="2"/><rect x="10.500" y="45.500" width="2" height="2"/><rect x="10.500" y="50" width="2" height="2"/></g>
      <g fill="#9c9cb6"><rect x="14.500" y="19.500" width="40" height="1"/><rect x="14.500" y="21.300" width="22" height=".8"/><rect x="14.500" y="24.500" width="34" height="1"/><rect x="14.500" y="28" width="24" height="1"/><rect x="14.500" y="29.800" width="18" height=".8"/><rect x="14.500" y="32" width="41" height="1"/><rect x="14.500" y="35.500" width="36" height="1"/><rect x="14.500" y="38.500" width="40" height="1"/><rect x="14.500" y="40.300" width="26" height=".8"/><rect x="14.500" y="42.500" width="33" height="1"/><rect x="14.500" y="46" width="40" height="1"/><rect x="14.500" y="47.800" width="20" height=".8"/><rect x="14.500" y="50.500" width="41" height="1"/></g>
      <rect x="13.500" y="53.800" width="42" height="1.400" fill="#8484a4"/>
      <rect x="22" y="58.500" width="20" height="1" fill="#9090ac"/>
      <rect x="9.500" y="60.500" width="47.500" height="9.500" rx="1" fill="#fff" stroke="#a4a4c4" stroke-width=".5"/>
      <g fill="#a0a0b8"><rect x="12" y="62.500" width="43" height="1"/><rect x="12" y="64.800" width="43" height="1"/><rect x="12" y="67.100" width="34" height="1"/></g>
      <rect x="9" y="73" width="24" height="1" fill="#8a8aa6"/><rect x="35" y="73" width="20" height=".7" fill="#b0b0c4"/>
      <rect x="9" y="81.500" width="8" height="2.600" fill="#9a9ab6"/><rect x="18" y="82.500" width="7" height=".8" fill="#b0b0c4"/><rect x="29" y="81" width="12" height="1" fill="#b0b0c4"/><rect x="29" y="83" width="27" height=".8" fill="#b8b8cc"/>
    </svg>
    <!-- 9 man -->
    <svg style="left:460px;top:145px" width="120" height="66" viewBox="0 0 120 66">
      <clipPath id="c9"><rect width="120" height="66" rx="5"/></clipPath>
      <g clip-path="url(#c9)">
        <rect width="120" height="66" fill="url(#manbg)"/>
        <rect x="80" y="0" width="40" height="66" fill="url(#mansh)"/>
        <path d="M19 66Q22 52 34 49L48 42.500H72L86 49Q94 52 96 66Z" fill="#3c3d40"/>
        <path d="M49 43L59.500 52L70 43L68 40H51Z" fill="#e6e4e6"/>
        <path d="M57.500 50.500H61.500L63 66H56Z" fill="#5a5a64"/>
        <path d="M48.500 43L55 66H50L40 47Z" fill="#2f3033"/><path d="M70.500 43L64 66H69L79 47Z" fill="#2f3033"/>
        <ellipse cx="59.700" cy="26" rx="12" ry="15.500" fill="#c9a48c"/>
        <path d="M43 26Q40 9 52 4.500Q60 1 68 4.500Q79 9 76.500 26Q75 17 70 13Q60 10 50 13Q45 17 43 26Z" fill="#b4b4b4"/>
        <path d="M43.500 24Q44 14 50 10Q46 18 46.500 27Z" fill="#9c9c9c"/><path d="M76 24Q75.500 14 69.500 10Q73.500 18 73 27Z" fill="#9c9c9c"/>
        <rect x="48.500" y="25.500" width="10" height="6" rx="1.400" fill="#caa890" stroke="#2a2422" stroke-width="1.100"/><rect x="61" y="25.500" width="10" height="6" rx="1.400" fill="#caa890" stroke="#2a2422" stroke-width="1.100"/><path d="M58.500 27.500H61" stroke="#2a2422" stroke-width="1"/>
        <path d="M56 37.500Q59.700 36.500 63.500 37.500" stroke="#8c6254" stroke-width=".9" fill="none"/>
        <use href="#chk" x="105" y="0"/>
      </g>
    </svg>
    <div class="dur" style="left:466px;top:150px">00:53</div>
    <!-- 10 music -->
    <svg style="left:604px;top:134px" width="120" height="88.500" viewBox="0 0 120 88.500"><use href="#music"/></svg>
    <div class="dur" style="left:610px;top:139px">02:18</div>
    <!-- captions row2 -->
    <span class="t" style="transform:scaleX(0.8918);left:53.81px;top:231.500px;font-size:12px;color:#c2c2c8">むすびに.mp4</span>
    <span class="t" style="transform:scaleX(0.9993);left:173.60px;top:231.500px;font-size:12px;color:#c2c2c8">参考２：大丈...頁.png</span>
    <span class="t" style="transform:scaleX(0.9993);left:317.60px;top:231.500px;font-size:12px;color:#c2c2c8">参考２：大丈...頁.png</span>
    <span class="t" style="transform:scaleX(0.9770);left:483.02px;top:231.500px;font-size:12px;color:#c2c2c8">閉会の辞.mp4</span>
    <span class="t" style="transform:scaleX(0.8937);left:614.80px;top:231.500px;font-size:12px;color:#c2c2c8">陽のあたる場所.mp3</span>
    <!-- collapse handle -->
    <div class="abs" style="left:0;top:178px;width:14px;height:30px;border-radius:3px;background:#35363c"></div>
    <svg style="left:3px;top:187px" width="7" height="12" viewBox="0 0 7 12" fill="none" stroke="#3d9df6" stroke-width="1.400"><path d="M6 0.800L1 6L6 11.200"/></svg>
    <!-- scrollbar -->
    <div class="abs" style="left:742.300px;top:3px;width:7.200px;height:398px;border-radius:4px;background:#2e303a"></div>
  </div>
</div>

<div id="rp">
  <div id="video"></div>
  <div class="abs" style="left:32px;top:432.500px;width:751px;height:1.200px;background:#3b3e45"></div>
  <div class="abs" style="left:26px;top:427px;width:12px;height:12px;border-radius:50%;background:#fff"></div>
  <div id="tc"><span class="t" style="transform:scaleX(0.9746);left:15.00px;top:6.500px;font-size:12px;color:#e6e6ea">00 : 00 : 00 : 00</span></div>
  <div id="ctl">
        <svg style="left:24px;top:12px" width="17" height="21" viewBox="0 0 17 21" fill="none" stroke="#b4b4bc" stroke-width="1.200" stroke-linejoin="round"><path d="M1.200 1.200L15.400 10.200L1.200 19.200Z"/></svg>
    <svg style="left:60px;top:14px" width="16" height="16" viewBox="0 0 16 16" fill="none" stroke="#b4b4bc" stroke-width="1.200"><rect x="0.800" y="0.800" width="14.200" height="14.200"/></svg>
    <svg style="left:95px;top:13px" width="18" height="19" viewBox="0 0 18 19" fill="none" stroke="#b4b4bc" stroke-width="1.200" stroke-linejoin="round"><path d="M12.800 1L0.800 9.400L12.800 17.800Z"/><path d="M16.400 0.600V18.200" stroke-width="1.300"/></svg>
    <svg style="left:131px;top:13px" width="18" height="19" viewBox="0 0 18 19" fill="none" stroke="#b4b4bc" stroke-width="1.200" stroke-linejoin="round"><path d="M5.200 1L17.200 9.400L5.200 17.800Z"/><path d="M1.600 0.600V18.200" stroke-width="1.300"/></svg>
    <!-- camera -->
    <svg style="left:722px;top:14px" width="21" height="18" viewBox="0 0 21 18" fill="none" stroke="#b4b4bc" stroke-width="1.300"><path d="M0.700 4H5L6.800 1.200H13.600L15.400 4H19.600V15.800H0.700Z"/><circle cx="10.200" cy="9.800" r="3.200"/></svg>
    <!-- render preview -->
    <svg style="left:757px;top:12px" width="24" height="22" viewBox="0 0 24 22" fill="none" stroke="#b4b4bc" stroke-width="1.200"><circle cx="11" cy="12.500" r="6.300"/><path d="M9.200 9.500L14.200 12.500L9.200 15.500Z" fill="#b4b4bc" stroke="none"/><path d="M2.9 11.1L1.0 10.7M3.8 8.5L2.1 7.6M5.5 6.4L4.2 4.9M7.8 5.0L7.0 3.1M10.4 4.3L10.3 2.3M13.1 4.6L13.6 2.6M15.6 5.7L16.7 4.0M17.5 7.6L19.1 6.4M18.8 10.0L20.7 9.3M19.2 12.6L21.2 12.7M18.7 15.3L20.6 16.0" stroke-width="1.100" opacity=".75"/></svg>
    <!-- preview settings -->
    <svg style="left:794px;top:13px" width="22" height="19" viewBox="0 0 22 19" fill="none" stroke="#b4b4bc" stroke-width="1.300"><path d="M11.500 15.800H0.800V0.800H19V10"/><path d="M4 7V3.800H7.500M12.500 3.800H16V7M4 9.500V12.800H7.500" stroke-width="1.200"/><circle cx="16.600" cy="14.200" r="2.300"/><path d="M16.600 10.400V11.600M16.600 16.800V18M12.800 14.200H14M19.200 14.200H20.400M13.900 11.500L14.800 12.400M18.400 16L19.300 16.900M19.300 11.500L18.400 12.400M14.800 16L13.900 16.900" stroke-width="1.200"/></svg>
    <!-- zoom -->
    <svg style="left:831px;top:13px" width="20" height="20" viewBox="0 0 20 20" fill="none" stroke="#b4b4bc" stroke-width="1.300"><path d="M0.800 5V0.800H5M14 0.800H18.200V5M0.800 14V18.200H5M14 18.200H18.200V14"/><circle cx="8" cy="7.600" r="3.900"/><path d="M10.800 10.600L16.200 16" stroke-width="1.500"/></svg>
    <!-- fullscreen -->
    <svg style="left:867px;top:13px" width="20" height="20" viewBox="0 0 20 20" fill="none" stroke="#b4b4bc" stroke-width="1.300"><path d="M0.800 6V0.800H6M12.500 18.200H18.200V12.500"/><path d="M11.500 0.800H18.200V7.500M18 1L11 8" /><path d="M0.800 11.500V18.200H7.500M1 18L8 11"/></svg>
    <!-- 16:9 -->
    <svg style="left:901px;top:15px" width="23" height="16" viewBox="0 0 23 16" fill="none" stroke="#b4b4bc" stroke-width="1.300"><path d="M0.800 3.400V0.800H21.400V3.400M0.800 11V13.800H21.400V11"/></svg>
    <span class="t" style="transform:scaleX(1.0407);left:904.00px;top:18px;font-size:8.500px;color:#b4b4bc">16:9</span>
  </div>
</div>

<div id="tl">
<div id="tlbar">
<svg style="left:12px;top:8px" width="21" height="21" viewBox="0 0 21 21" fill="none" stroke="#b4b4bc" stroke-width="1.300"><rect x="0.800" y="0.800" width="19" height="19"/><path d="M3.500 4.200H6M8.800 4.200H11.800M14.600 4.200H17M3.500 16.200H6M14.600 16.200H17M3 10H5M15.600 10H17.600" stroke-width="1.400"/><rect x="7.200" y="7.600" width="6" height="3.600" stroke-width="1.500"/><path d="M10.200 11.400V17.500" stroke-width="1.500"/></svg>
<div class="abs" style="left:45px;top:10px;width:1px;height:15px;background:#3c3c42"></div>
<svg style="left:62px;top:9px" width="23" height="18" viewBox="0 0 23 18" fill="none" stroke="#55555c" stroke-width="1.200" stroke-linejoin="round"><path d="M8.600 13.600L6.200 9.600L16.400 1.400Q19.400 0.200 21 2.800Q21.800 5 20 6.600Z"/><path d="M8.600 13.600L0.800 16.200H21" /><path d="M6.200 9.600L0.800 16.200" /><circle cx="10.400" cy="9.800" r=".7"/></svg>
<div class="abs" style="left:103px;top:10px;width:1px;height:15px;background:#3c3c42"></div>
<svg style="left:1869px;top:8px" width="23" height="21" viewBox="0 0 23 21" fill="none" stroke="#b4b4bc" stroke-width="1.300" stroke-linejoin="round"><path d="M12 15.600H1V4.600H20V8"/><path d="M6.400 4.600V1H14.600V4.600"/><path d="M1 9.600H13M5.600 8V11.400" stroke-width="1.200"/><path d="M11.600 19.600L12.600 16.200L18.800 9.400L21.600 11.800L15.200 18.600Z" fill="#26262b"/></svg>
</div><div id="tlline"></div>
<div class="hb" style="left:-1px;width:53px"></div><div class="hb" style="left:56px;width:52px"></div>
<svg style="left:17px;top:46px" width="20" height="18" viewBox="0 0 20 18" fill="none" stroke="#b4b4bc" stroke-width="1.200"><path d="M10 12.800H0.800V0.800H16V8"/><path d="M3 4.200H5.600M7.400 4.200H10M11.800 4.200H14M3 9.400H5.600M7.400 9.400H9.600" stroke-width="1.100"/><circle cx="14.400" cy="12.800" r="4.200"/><path d="M14.400 10.400V15.200M12 12.800H16.800" stroke-width="1.100"/></svg>
<svg style="left:73px;top:49px" width="18" height="9" viewBox="0 0 18 9" fill="#b4b4bc" stroke="#b4b4bc"><path d="M0.300 0.800L5.600 4.500L0.300 8.200Z" stroke="none"/><path d="M17.700 0.800L12.400 4.500L17.700 8.200Z" stroke="none"/><path d="M5.600 4.500H12.400" stroke-width="1"/><path d="M7.400 0V9M10.600 0V9" stroke-width="1.100"/></svg>
<svg style="left:0;top:0" width="1888" height="86"><path d="M147.5 77V85M174.5 77V85M201.5 77V85M228.5 77V85M255.5 73V85M282.5 77V85M309.5 77V85M336.5 77V85M362.5 77V85M389.5 73V85M416.5 77V85M443.5 77V85M470.5 77V85M497.5 77V85M524.5 73V85M551.5 77V85M578.5 77V85M605.5 77V85M632.5 77V85M659.5 73V85M686.5 77V85M713.5 77V85M740.5 77V85M767.5 77V85M793.5 73V85M820.5 77V85M847.5 77V85M874.5 77V85M901.5 77V85M928.5 73V85M955.5 77V85M982.5 77V85M1009.5 77V85M1036.5 77V85M1063.5 73V85M1090.5 77V85M1117.5 77V85M1144.5 77V85M1171.5 77V85M1198.5 73V85M1224.5 77V85M1251.5 77V85M1278.5 77V85M1305.5 77V85M1332.5 73V85M1359.5 77V85M1386.5 77V85M1413.5 77V85M1440.5 77V85M1467.5 73V85M1494.5 77V85M1521.5 77V85M1548.5 77V85M1575.5 77V85M1602.5 73V85M1629.5 77V85M1655.5 77V85M1682.5 77V85M1709.5 77V85M1736.5 73V85M1763.5 77V85M1790.5 77V85M1817.5 77V85M1844.5 77V85M1871.5 73V85" stroke="#9a9cab" stroke-width="1" fill="none"/></svg>
<div class="abs" style="left:0;top:35px;width:1888px;height:50px;overflow:hidden">
<span class="t" style="transform:scaleX(1.0168);left:120.50px;top:21.500px;font-size:11.500px;font-weight:bold;color:#e4e4e6">0:00</span>
<span class="t" style="transform:scaleX(1.0206);left:231.40px;top:21.500px;font-size:11.500px;font-weight:bold;color:#e4e4e6">00:04:05</span>
<span class="t" style="transform:scaleX(1.0430);left:366.10px;top:21.500px;font-size:11.500px;font-weight:bold;color:#e4e4e6">00:08:10</span>
<span class="t" style="transform:scaleX(1.0206);left:500.80px;top:21.500px;font-size:11.500px;font-weight:bold;color:#e4e4e6">00:12:15</span>
<span class="t" style="transform:scaleX(1.0430);left:635.50px;top:21.500px;font-size:11.500px;font-weight:bold;color:#e4e4e6">00:16:20</span>
<span class="t" style="transform:scaleX(1.0206);left:770.20px;top:21.500px;font-size:11.500px;font-weight:bold;color:#e4e4e6">00:20:25</span>
<span class="t" style="transform:scaleX(1.0430);left:904.80px;top:21.500px;font-size:11.500px;font-weight:bold;color:#e4e4e6">00:25:00</span>
<span class="t" style="transform:scaleX(1.0206);left:1039.50px;top:21.500px;font-size:11.500px;font-weight:bold;color:#e4e4e6">00:29:05</span>
<span class="t" style="transform:scaleX(1.0430);left:1174.20px;top:21.500px;font-size:11.500px;font-weight:bold;color:#e4e4e6">00:33:10</span>
<span class="t" style="transform:scaleX(1.0206);left:1308.90px;top:21.500px;font-size:11.500px;font-weight:bold;color:#e4e4e6">00:37:15</span>
<span class="t" style="transform:scaleX(1.0430);left:1443.60px;top:21.500px;font-size:11.500px;font-weight:bold;color:#e4e4e6">00:41:20</span>
<span class="t" style="transform:scaleX(1.0206);left:1578.30px;top:21.500px;font-size:11.500px;font-weight:bold;color:#e4e4e6">00:45:25</span>
<span class="t" style="transform:scaleX(1.0430);left:1713.00px;top:21.500px;font-size:11.500px;font-weight:bold;color:#e4e4e6">00:50:00</span>
<span class="t" style="transform:scaleX(1.0206);left:1847.70px;top:21.500px;font-size:11.500px;font-weight:bold;color:#e4e4e6">00:54:05</span>
</div>
<div class="abs" style="left:0;top:85px;width:1888px;height:50px;background:#31343e"></div>
<div class="abs" style="left:0;top:135px;width:1888px;height:1px;background:repeating-linear-gradient(90deg,#1c1d22 0 1px,#31343e 1px 2px)"></div>
<div class="abs" style="left:0;top:136px;width:1888px;height:100px;background:#31343e"></div>
<div class="abs" style="left:0;top:236px;width:1888px;height:1px;background:#44464f"></div>
<div class="abs" style="left:0;top:237px;width:1888px;height:49px;background:#1e1f23"></div>
<div class="abs" style="left:0;top:286px;width:1888px;height:1px;background:repeating-linear-gradient(90deg,#484a53 0 1px,#1e1f23 1px 2px)"></div>
<div class="abs" style="left:0;top:287px;width:1888px;height:70px;background:#1e1f23"></div>
<div class="abs" style="left:0;top:357px;width:1888px;height:1px;background:#40424b"></div>
<div class="abs" style="left:0;top:358px;width:1888px;height:50px;background:#1e1f23"></div>
<div class="abs" style="left:0;top:408px;width:1888px;height:1px;background:repeating-linear-gradient(90deg,#484a53 0 1px,#1e1f23 1px 2px)"></div>
<div class="abs" style="left:0;top:409px;width:1888px;height:30px;background:#181818"></div>
<div class="abs" style="left:0;top:439px;width:1888px;height:1px;background:#4a4d58"></div>
<div class="abs" style="left:0;top:440px;width:1888px;height:12px;background:#1e1f23"></div>
<div class="abs" style="left:116px;top:85px;width:4px;height:367px;background:#060608"></div>
<span class="t" style="left:11.500px;top:104.5px;font-size:9.500px;color:#d0d0d6">1</span>
<svg style="left:26px;top:106px" width="16" height="9" viewBox="0 0 16 9" fill="#8c8c90"><rect x="0.300" y="0" width="11" height="8.600" rx="1"/><path d="M11 3L15.300 0.600V8L11 5.600Z"/></svg>
<svg style="left:59px;top:104px" width="15" height="10" viewBox="0 0 15 10" fill="none" stroke="#9c9ca0" stroke-width="1"><path d="M0.600 5Q3.600 0.600 7.500 0.600Q11.400 0.600 14.400 5Q11.400 9.400 7.500 9.400Q3.600 9.400 0.600 5Z"/><circle cx="7.500" cy="5" r="2.300"/></svg>
<svg style="left:94px;top:102px" width="14" height="15" viewBox="0 0 14 15" fill="none" stroke="#9c9ca0" stroke-width="1.200"><rect x="0.700" y="6.800" width="10.400" height="7.400"/><path d="M6 6.800V3.800Q6 0.800 9 0.800Q12.400 0.800 12.600 4.400"/><rect x="4.900" y="9.600" width="1.800" height="1.800" fill="#9c9ca0" stroke="none"/></svg>
<span class="t" style="left:11.500px;top:179.5px;font-size:9.500px;color:#d0d0d6">1</span>
<svg style="left:28px;top:178px" width="13" height="14" viewBox="0 0 13 14" fill="#9c9ca0"><path d="M3.800 2.200L12.200 0.200V10H11V3.600L5 5V12H3.800Z"/><ellipse cx="2.600" cy="11.800" rx="2.500" ry="1.900"/><ellipse cx="9.900" cy="9.900" rx="2.500" ry="1.900"/></svg>
<svg style="left:59px;top:178px" width="15" height="13" viewBox="0 0 15 13" fill="none" stroke="#9c9ca0" stroke-width="1"><path d="M0.600 4H3.600L7.600 0.800V12.200L3.600 9H0.600Z"/><path d="M9.600 4.400Q10.800 6.500 9.600 8.600M11.800 2.800Q13.800 6.500 11.800 10.200"/></svg>
<svg style="left:94px;top:177px" width="14" height="15" viewBox="0 0 14 15" fill="none" stroke="#9c9ca0" stroke-width="1.200"><rect x="0.700" y="6.800" width="10.400" height="7.400"/><path d="M6 6.800V3.800Q6 0.800 9 0.800Q12.400 0.800 12.600 4.400"/><rect x="4.900" y="9.600" width="1.800" height="1.800" fill="#9c9ca0" stroke="none"/></svg>
<span class="t" style="left:11.500px;top:255.5px;font-size:9.500px;color:#d0d0d6">2</span>
<svg style="left:26px;top:257px" width="16" height="9" viewBox="0 0 16 9" fill="#8c8c90"><rect x="0.300" y="0" width="11" height="8.600" rx="1"/><path d="M11 3L15.300 0.600V8L11 5.600Z"/></svg>
<svg style="left:59px;top:255px" width="15" height="10" viewBox="0 0 15 10" fill="none" stroke="#9c9ca0" stroke-width="1"><path d="M0.600 5Q3.600 0.600 7.500 0.600Q11.400 0.600 14.400 5Q11.400 9.400 7.500 9.400Q3.600 9.400 0.600 5Z"/><circle cx="7.500" cy="5" r="2.300"/></svg>
<svg style="left:94px;top:253px" width="14" height="15" viewBox="0 0 14 15" fill="none" stroke="#9c9ca0" stroke-width="1.200"><rect x="0.700" y="6.800" width="10.400" height="7.400"/><path d="M6 6.800V3.800Q6 0.800 9 0.800Q12.400 0.800 12.600 4.400"/><rect x="4.900" y="9.600" width="1.800" height="1.800" fill="#9c9ca0" stroke="none"/></svg>
<span class="t" style="left:11.500px;top:316.5px;font-size:9.500px;color:#d0d0d6">2</span>
<svg style="left:28px;top:315px" width="13" height="14" viewBox="0 0 13 14" fill="#9c9ca0"><path d="M3.800 2.200L12.200 0.200V10H11V3.600L5 5V12H3.800Z"/><ellipse cx="2.600" cy="11.800" rx="2.500" ry="1.900"/><ellipse cx="9.900" cy="9.900" rx="2.500" ry="1.900"/></svg>
<svg style="left:59px;top:315px" width="15" height="13" viewBox="0 0 15 13" fill="none" stroke="#9c9ca0" stroke-width="1"><path d="M0.600 4H3.600L7.600 0.800V12.200L3.600 9H0.600Z"/><path d="M9.600 4.400Q10.800 6.500 9.600 8.600M11.800 2.800Q13.800 6.500 11.800 10.200"/></svg>
<svg style="left:94px;top:314px" width="14" height="15" viewBox="0 0 14 15" fill="none" stroke="#9c9ca0" stroke-width="1.200"><rect x="0.700" y="6.800" width="10.400" height="7.400"/><path d="M6 6.800V3.800Q6 0.800 9 0.800Q12.400 0.800 12.600 4.400"/><rect x="4.900" y="9.600" width="1.800" height="1.800" fill="#9c9ca0" stroke="none"/></svg>
<span class="t" style="left:11.500px;top:377.5px;font-size:9.500px;color:#d0d0d6">3</span>
<svg style="left:26px;top:379px" width="16" height="9" viewBox="0 0 16 9" fill="#8c8c90"><rect x="0.300" y="0" width="11" height="8.600" rx="1"/><path d="M11 3L15.300 0.600V8L11 5.600Z"/></svg>
<svg style="left:59px;top:377px" width="15" height="10" viewBox="0 0 15 10" fill="none" stroke="#9c9ca0" stroke-width="1"><path d="M0.600 5Q3.600 0.600 7.500 0.600Q11.400 0.600 14.400 5Q11.400 9.400 7.500 9.400Q3.600 9.400 0.600 5Z"/><circle cx="7.500" cy="5" r="2.300"/></svg>
<svg style="left:94px;top:375px" width="14" height="15" viewBox="0 0 14 15" fill="none" stroke="#9c9ca0" stroke-width="1.200"><rect x="0.700" y="6.800" width="10.400" height="7.400"/><path d="M6 6.800V3.800Q6 0.800 9 0.800Q12.400 0.800 12.600 4.400"/><rect x="4.900" y="9.600" width="1.800" height="1.800" fill="#9c9ca0" stroke="none"/></svg>
<span class="t" style="left:11.500px;top:418.5px;font-size:9.500px;color:#d0d0d6">3</span>
<svg style="left:28px;top:417px" width="13" height="14" viewBox="0 0 13 14" fill="#9c9ca0"><path d="M3.800 2.200L12.200 0.200V10H11V3.600L5 5V12H3.800Z"/><ellipse cx="2.600" cy="11.800" rx="2.500" ry="1.900"/><ellipse cx="9.900" cy="9.900" rx="2.500" ry="1.900"/></svg>
<svg style="left:59px;top:417px" width="15" height="13" viewBox="0 0 15 13" fill="none" stroke="#9c9ca0" stroke-width="1"><path d="M0.600 4H3.600L7.600 0.800V12.200L3.600 9H0.600Z"/><path d="M9.600 4.400Q10.800 6.500 9.600 8.600M11.800 2.800Q13.800 6.500 11.800 10.200"/></svg>
<svg style="left:94px;top:416px" width="14" height="15" viewBox="0 0 14 15" fill="none" stroke="#9c9ca0" stroke-width="1.200"><rect x="0.700" y="6.800" width="10.400" height="7.400"/><path d="M6 6.800V3.800Q6 0.800 9 0.800Q12.400 0.800 12.600 4.400"/><rect x="4.900" y="9.600" width="1.800" height="1.800" fill="#9c9ca0" stroke="none"/></svg>
<svg style="left:121px;top:87px" width="6" height="48" viewBox="0 0 6 48" fill="none" stroke="#e8e8ec" stroke-width="1"><path d="M4.500 0.500Q1 1 1 4.500V43.500Q1 47 4.500 47.500"/></svg>
<div class="abs" style="left:214px;top:138px;width:214px;height:94px;background:#5552a4;border-radius:4px;overflow:hidden">
<svg style="left:0;top:0" width="214" height="94"><path d="M0 90.2L0 69.2L1 69.2L1 69.2L2 69.2L2 69.2L3 69.2L3 69.2L4 69.2L4 69.6L5 69.6L5 70.2L6 70.2L6 70.8L7 70.8L7 71.4L8 71.4L8 73.0L9 73.0L9 74.7L10 74.7L10 76.1L11 76.1L11 76.8L12 76.8L12 77.5L13 77.5L13 78.2L14 78.2L14 78.9L15 78.9L15 79.6L16 79.6L16 79.6L17 79.6L17 78.9L18 78.9L18 78.1L19 78.1L19 77.4L20 77.4L20 76.6L21 76.6L21 73.8L22 73.8L22 70.3L23 70.3L23 66.9L24 66.9L24 67.1L25 67.1L25 71.6L26 71.6L26 75.7L27 75.7L27 78.1L28 78.1L28 80.5L29 80.5L29 82.9L30 82.9L30 84.8L31 84.8L31 85.0L32 85.0L32 85.2L33 85.2L33 70.8L34 70.8L34 59.2L35 59.2L35 64.5L36 64.5L36 69.9L37 69.9L37 73.1L38 73.1L38 75.4L39 75.4L39 77.7L40 77.7L40 79.9L41 79.9L41 82.2L42 82.2L42 83.6L43 83.6L43 84.7L44 84.7L44 82.9L45 82.9L45 66.8L46 66.8L46 67.3L47 67.3L47 68.5L48 68.5L48 70.9L49 70.9L49 75.1L50 75.1L50 79.4L51 79.4L51 80.9L52 80.9L52 81.9L53 81.9L53 82.8L54 82.8L54 83.7L55 83.7L55 84.7L56 84.7L56 72.4L57 72.4L57 69.9L58 69.9L58 73.6L59 73.6L59 76.7L60 76.7L60 77.9L61 77.9L61 79.5L62 79.5L62 81.0L63 81.0L63 81.0L64 81.0L64 83.2L65 83.2L65 83.5L66 83.5L66 84.9L67 84.9L67 69.4L68 69.4L68 64.1L69 64.1L69 71.1L70 71.1L70 73.6L71 73.6L71 76.0L72 76.0L72 75.3L73 75.3L73 73.3L74 73.3L74 70.9L75 70.9L75 73.3L76 73.3L76 72.7L77 72.7L77 70.8L78 70.8L78 69.2L79 69.2L79 70.9L80 70.9L80 72.5L81 72.5L81 71.3L82 71.3L82 76.0L83 76.0L83 73.3L84 73.3L84 75.8L85 75.8L85 76.7L86 76.7L86 77.2L87 77.2L87 75.8L88 75.8L88 72.4L89 72.4L89 73.7L90 73.7L90 70.5L91 70.5L91 68.8L92 68.8L92 70.4L93 70.4L93 72.2L94 72.2L94 76.7L95 76.7L95 78.9L96 78.9L96 80.3L97 80.3L97 81.2L98 81.2L98 83.7L99 83.7L99 85.0L100 85.0L100 85.6L101 85.6L101 82.6L102 82.6L102 62.3L103 62.3L103 54.2L104 54.2L104 60.0L105 60.0L105 63.9L106 63.9L106 63.9L107 63.9L107 64.6L108 64.6L108 62.9L109 62.9L109 65.1L110 65.1L110 69.3L111 69.3L111 69.0L112 69.0L112 70.0L113 70.0L113 69.2L114 69.2L114 70.6L115 70.6L115 73.3L116 73.3L116 71.2L117 71.2L117 75.5L118 75.5L118 75.2L119 75.2L119 75.0L120 75.0L120 78.0L121 78.0L121 77.9L122 77.9L122 80.1L123 80.1L123 79.0L124 79.0L124 79.1L125 79.1L125 79.9L126 79.9L126 79.5L127 79.5L127 81.1L128 81.1L128 80.6L129 80.6L129 81.1L130 81.1L130 81.5L131 81.5L131 81.8L132 81.8L132 81.1L133 81.1L133 81.0L134 81.0L134 82.1L135 82.1L135 81.8L136 81.8L136 83.1L137 83.1L137 81.9L138 81.9L138 82.1L139 82.1L139 81.6L140 81.6L140 82.0L141 82.0L141 83.1L142 83.1L142 83.0L143 83.0L143 82.6L144 82.6L144 83.8L145 83.8L145 83.2L146 83.2L146 83.8L147 83.8L147 84.0L148 84.0L148 84.1L149 84.1L149 83.1L150 83.1L150 84.2L151 84.2L151 84.2L152 84.2L152 84.1L153 84.1L153 83.5L154 83.5L154 84.8L155 84.8L155 84.4L156 84.4L156 84.4L157 84.4L157 84.1L158 84.1L158 84.3L159 84.3L159 84.4L160 84.4L160 85.3L161 85.3L161 85.2L162 85.2L162 85.4L163 85.4L163 84.9L164 84.9L164 85.0L165 85.0L165 86.0L166 86.0L166 86.1L167 86.1L167 86.2L168 86.2L168 86.3L169 86.3L169 86.3L170 86.3L170 86.5L171 86.5L171 86.7L172 86.7L172 86.9L173 86.9L173 87.1L174 87.1L174 87.4L175 87.4L175 87.6L176 87.6L176 87.7L177 87.7L177 87.7L178 87.7L178 87.7L179 87.7L179 87.7L180 87.7L180 87.7L181 87.7L181 87.7L182 87.7L182 87.7L183 87.7L183 87.7L184 87.7L184 87.7L185 87.7L185 87.7L186 87.7L186 87.8L187 87.8L187 87.8L188 87.8L188 87.8L189 87.8L189 87.8L190 87.8L190 87.8L191 87.8L191 87.8L192 87.8L192 87.8L193 87.8L193 87.8L194 87.8L194 87.8L195 87.8L195 87.8L196 87.8L196 87.8L197 87.8L197 87.8L198 87.8L198 87.8L199 87.8L199 87.8L200 87.8L200 87.8L201 87.8L201 87.8L202 87.8L202 87.8L203 87.8L203 87.8L204 87.8L204 87.8L205 87.8L205 87.9L206 87.9L206 87.9L207 87.9L207 87.9L208 87.9L208 87.9L209 87.9L209 87.9L210 87.9L210 87.9L211 87.9L211 87.9L212 87.9L212 87.9L213 87.9L213 87.9L214 87.9L214 90.2Z" fill="#a8a4f8"/><rect x="0" y="87.700" width="214" height="2.500" fill="#a8a4f8"/><rect x="2" y="76.500" width="210" height="1.500" fill="#c6c4e4" opacity=".9"/><rect x="2" y="78" width="210" height=".8" fill="#2e2c58" opacity=".7"/></svg>
<svg style="left:6px;top:4px" width="11" height="11" viewBox="0 0 11 11" fill="#fff"><path d="M3.200 1.400L10.400 0V8H9.400V2.600L4.200 3.600V9.800H3.200Z"/><ellipse cx="2.200" cy="9.600" rx="2" ry="1.500"/><ellipse cx="8.400" cy="8" rx="2" ry="1.500"/></svg>
<span class="t" style="transform:scaleX(0.8911);left:25.02px;top:5px;font-size:11.500px;color:#fff">３．描く編（コーヒーで休憩）</span>
</div>
<svg width="0" height="0" style="left:0;top:0"><defs>
<pattern id="thm" y="17" width="48" height="27" patternUnits="userSpaceOnUse"><rect width="48" height="27" fill="#fff"/><rect x="42.500" y="0" width="5" height="27" fill="#fbd9e4"/><rect x="0" y="24" width="48" height="3" fill="#fbd9e4"/><rect x="7.500" y="6.500" width="28" height="10" fill="#fff" stroke="#cfc6dc" stroke-width=".6"/><path d="M12.500 8.600H27M12.500 10.900H33M12.500 13.200H33M12.500 15.300H28" stroke="#55555c" stroke-width=".9" stroke-dasharray="1.300 .7"/></pattern>
<g id="av"><circle r="4" fill="#7c7a78"/><path d="M-3.200 2.600Q0 -0.500 3.200 2.600Q1.500 4 0 4Q-1.500 4 -3.200 2.600Z" fill="#2c2d30"/><ellipse cx="0" cy="-0.600" rx="1.600" ry="2" fill="#d0ab94"/><path d="M-1.800 -1Q-1.800 -3.200 0 -3.200Q1.800 -3.200 1.800 -1Q0.900 -2.200 0 -2.200Q-0.900 -2.200 -1.800 -1Z" fill="#c0c0c0"/></g>
</defs></svg>
<div class="abs" style="left:121px;top:239px;width:291px;height:115px;background:#06407f;border-radius:3px;overflow:hidden">
<svg style="left:0;top:0" width="291" height="115">
<rect x="0" y="17" width="291" height="27" fill="url(#thm)"/>
<path d="M1 43.500L64 19.500H289" stroke="#2a2a30" stroke-width="1" fill="none"/>
<path d="M0 109.5L0 109.5L1 109.5L1 109.5L2 109.5L2 109.5L3 109.5L3 109.5L4 109.5L4 109.5L5 109.5L5 109.5L6 109.5L6 109.5L7 109.5L7 109.5L8 109.5L8 109.5L9 109.5L9 109.5L10 109.5L10 109.5L11 109.5L11 109.5L12 109.5L12 109.5L13 109.5L13 109.5L14 109.5L14 109.5L15 109.5L15 109.5L16 109.5L16 109.5L17 109.5L17 109.5L18 109.5L18 109.5L19 109.5L19 109.5L20 109.5L20 109.5L21 109.5L21 109.5L22 109.5L22 109.5L23 109.5L23 109.5L24 109.5L24 109.5L25 109.5L25 109.5L26 109.5L26 109.5L27 109.5L27 109.5L28 109.5L28 109.5L29 109.5L29 109.5L30 109.5L30 109.5L31 109.5L31 109.5L32 109.5L32 109.5L33 109.5L33 109.5L34 109.5L34 109.5L35 109.5L35 109.5L36 109.5L36 109.5L37 109.5L37 109.5L38 109.5L38 109.5L39 109.5L39 109.5L40 109.5L40 109.5L41 109.5L41 109.5L42 109.5L42 109.5L43 109.5L43 109.5L44 109.5L44 109.5L45 109.5L45 109.5L46 109.5L46 109.5L47 109.5L47 109.5L48 109.5L48 109.5L49 109.5L49 109.5L50 109.5L50 109.5L51 109.5L51 109.5L52 109.5L52 109.5L53 109.5L53 109.5L54 109.5L54 109.5L55 109.5L55 109.5L56 109.5L56 109.5L57 109.5L57 109.5L58 109.5L58 109.5L59 109.5L59 109.5L60 109.5L60 109.5L61 109.5L61 109.5L62 109.5L62 109.5L63 109.5L63 109.5L64 109.5L64 109.5L65 109.5L65 109.5L66 109.5L66 109.5L67 109.5L67 109.5L68 109.5L68 109.5L69 109.5L69 109.5L70 109.5L70 109.5L71 109.5L71 109.5L72 109.5L72 109.5L73 109.5L73 109.5L74 109.5L74 109.5L75 109.5L75 109.5L76 109.5L76 109.5L77 109.5L77 109.5L78 109.5L78 109.5L79 109.5L79 109.5L80 109.5L80 109.5L81 109.5L81 109.5L82 109.5L82 109.5L83 109.5L83 109.5L84 109.5L84 109.5L85 109.5L85 109.5L86 109.5L86 109.5L87 109.5L87 109.5L88 109.5L88 109.5L89 109.5L89 109.5L90 109.5L90 109.5L91 109.5L91 109.5L92 109.5L92 109.5L93 109.5L93 109.5L94 109.5L94 109.5L95 109.5L95 109.5L96 109.5L96 109.5L97 109.5L97 109.5L98 109.5L98 109.5L99 109.5L99 109.5L100 109.5L100 109.5L101 109.5L101 109.5L102 109.5L102 109.5L103 109.5L103 109.5L104 109.5L104 109.5L105 109.5L105 109.5L106 109.5L106 109.5L107 109.5L107 109.5L108 109.5L108 109.5L109 109.5L109 109.5L110 109.5L110 109.5L111 109.5L111 109.5L112 109.5L112 109.5L113 109.5L113 109.5L114 109.5L114 109.5L115 109.5L115 109.5L116 109.5L116 109.5L117 109.5L117 109.5L118 109.5L118 109.5L119 109.5L119 109.5L120 109.5L120 109.5L121 109.5L121 109.5L122 109.5L122 109.5L123 109.5L123 109.5L124 109.5L124 109.5L125 109.5L125 109.5L126 109.5L126 109.5L127 109.5L127 109.5L128 109.5L128 109.5L129 109.5L129 109.5L130 109.5L130 109.5L131 109.5L131 109.5L132 109.5L132 109.5L133 109.5L133 109.5L134 109.5L134 109.5L135 109.5L135 109.5L136 109.5L136 109.5L137 109.5L137 109.5L138 109.5L138 109.5L139 109.5L139 109.5L140 109.5L140 109.5L141 109.5L141 109.5L142 109.5L142 109.5L143 109.5L143 109.5L144 109.5L144 109.5L145 109.5L145 109.5L146 109.5L146 109.5L147 109.5L147 109.5L148 109.5L148 109.5L149 109.5L149 109.5L150 109.5L150 109.5L151 109.5L151 109.5L152 109.5L152 109.5L153 109.5L153 108.3L154 108.3L154 108.3L155 108.3L155 109.5L156 109.5L156 109.5L157 109.5L157 108.3L158 108.3L158 109.5L159 109.5L159 109.5L160 109.5L160 108.3L161 108.3L161 109.5L162 109.5L162 108.3L163 108.3L163 109.5L164 109.5L164 108.3L165 108.3L165 109.5L166 109.5L166 108.3L167 108.3L167 108.3L168 108.3L168 109.5L169 109.5L169 108.3L170 108.3L170 108.3L171 108.3L171 109.5L172 109.5L172 108.3L173 108.3L173 109.5L174 109.5L174 109.5L175 109.5L175 109.5L176 109.5L176 108.3L177 108.3L177 109.5L178 109.5L178 108.3L179 108.3L179 108.3L180 108.3L180 108.3L181 108.3L181 108.3L182 108.3L182 109.5L183 109.5L183 108.3L184 108.3L184 109.5L185 109.5L185 108.3L186 108.3L186 108.3L187 108.3L187 109.5L188 109.5L188 109.5L189 109.5L189 109.5L190 109.5L190 108.3L191 108.3L191 109.5L192 109.5L192 108.3L193 108.3L193 109.5L194 109.5L194 109.5L195 109.5L195 109.5L196 109.5L196 109.5L197 109.5L197 109.5L198 109.5L198 109.5L199 109.5L199 108.3L200 108.3L200 108.3L201 108.3L201 108.3L202 108.3L202 108.3L203 108.3L203 108.3L204 108.3L204 108.3L205 108.3L205 109.5L206 109.5L206 108.3L207 108.3L207 108.3L208 108.3L208 108.3L209 108.3L209 109.5L210 109.5L210 108.3L211 108.3L211 109.5L212 109.5L212 108.3L213 108.3L213 109.5L214 109.5L214 109.5L215 109.5L215 109.5L216 109.5L216 108.3L217 108.3L217 108.3L218 108.3L218 109.5L219 109.5L219 108.3L220 108.3L220 109.5L221 109.5L221 109.5L222 109.5L222 109.5L223 109.5L223 108.3L224 108.3L224 108.3L225 108.3L225 109.5L226 109.5L226 108.3L227 108.3L227 109.5L228 109.5L228 108.3L229 108.3L229 109.5L230 109.5L230 108.3L231 108.3L231 108.3L232 108.3L232 109.5L233 109.5L233 108.3L234 108.3L234 109.5L235 109.5L235 109.5L236 109.5L236 109.5L237 109.5L237 109.5L238 109.5L238 109.5L239 109.5L239 109.5L240 109.5L240 108.3L241 108.3L241 109.5L242 109.5L242 109.5L243 109.5L243 108.3L244 108.3L244 109.5L245 109.5L245 108.3L246 108.3L246 108.3L247 108.3L247 109.5L248 109.5L248 109.5L249 109.5L249 109.5L250 109.5L250 108.3L251 108.3L251 109.5L252 109.5L252 109.5L253 109.5L253 108.3L254 108.3L254 108.3L255 108.3L255 109.5L256 109.5L256 109.5L257 109.5L257 108.3L258 108.3L258 109.5L259 109.5L259 109.5L260 109.5L260 108.3L261 108.3L261 109.5L262 109.5L262 109.5L263 109.5L263 109.5L264 109.5L264 109.5L265 109.5L265 109.5L266 109.5L266 109.5L267 109.5L267 108.3L268 108.3L268 108.3L269 108.3L269 109.5L270 109.5L270 108.3L271 108.3L271 109.5L272 109.5L272 108.3L273 108.3L273 109.5L274 109.5L274 108.3L275 108.3L275 108.3L276 108.3L276 109.5L277 109.5L277 109.5L278 109.5L278 108.3L279 108.3L279 108.3L280 108.3L280 109.5L281 109.5L281 109.5L282 109.5L282 109.5L283 109.5L283 109.5L284 109.5L284 109.5L285 109.5L285 109.5L286 109.5L286 109.5L287 109.5L287 109.5L288 109.5L288 109.5L289 109.5L289 109.5L290 109.5L290 108.3L291 108.3L291 109.5Z" fill="#1575d9"/>
<rect x="0" y="108.800" width="291" height="2.400" fill="#1575d9"/>
<rect x="2" y="87.900" width="287" height="1.700" fill="#7a9bc6"/><rect x="2" y="89.600" width="287" height="1" fill="#03234d"/>
<g fill="none" stroke="#e8eef8" stroke-width="1.100"><rect x="4.500" y="5.500" width="9" height="7.200" rx="1"/><path d="M13.500 8L17.300 5.800V12.400L13.500 10.200"/></g>
</svg>
<span class="t" style="transform:scaleX(0.9143);left:24.97px;top:4.500px;font-size:11.500px;color:#fff">４条・５条</span>
</div>
<div class="abs" style="left:414px;top:239px;width:1131px;height:115px;background:#06407f;border-radius:3px;overflow:hidden">
<svg style="left:0;top:0" width="1131" height="115">
<rect x="0" y="17" width="1131" height="27" fill="url(#thm)"/>
<use href="#av" x="92.0" y="39.800"/>
<use href="#av" x="140.0" y="39.800"/>
<use href="#av" x="188.0" y="39.800"/>
<use href="#av" x="236.0" y="39.800"/>
<use href="#av" x="284.0" y="39.800"/>
<use href="#av" x="332.0" y="39.800"/>
<use href="#av" x="380.0" y="39.800"/>
<use href="#av" x="428.0" y="39.800"/>
<use href="#av" x="476.0" y="39.800"/>
<use href="#av" x="524.0" y="39.800"/>
<use href="#av" x="572.0" y="39.800"/>
<use href="#av" x="620.0" y="39.800"/>
<use href="#av" x="668.0" y="39.800"/>
<use href="#av" x="716.0" y="39.800"/>
<use href="#av" x="764.0" y="39.800"/>
<use href="#av" x="812.0" y="39.800"/>
<use href="#av" x="860.0" y="39.800"/>
<use href="#av" x="908.0" y="39.800"/>
<use href="#av" x="956.0" y="39.800"/>
<use href="#av" x="1004.0" y="39.800"/>
<use href="#av" x="1052.0" y="39.800"/>
<use href="#av" x="1100.0" y="39.800"/>
<path d="M2 19.500H1129" stroke="#2a2a30" stroke-width="1" fill="none"/>
<path d="M0 109.5L0 109.5L1 109.5L1 109.5L2 109.5L2 109.5L3 109.5L3 109.5L4 109.5L4 109.5L5 109.5L5 109.5L6 109.5L6 109.5L7 109.5L7 109.5L8 109.5L8 109.5L9 109.5L9 109.5L10 109.5L10 109.5L11 109.5L11 109.5L12 109.5L12 109.5L13 109.5L13 109.5L14 109.5L14 109.5L15 109.5L15 109.5L16 109.5L16 109.5L17 109.5L17 109.5L18 109.5L18 109.5L19 109.5L19 109.5L20 109.5L20 109.5L21 109.5L21 109.5L22 109.5L22 109.5L23 109.5L23 109.5L24 109.5L24 109.5L25 109.5L25 109.5L26 109.5L26 109.5L27 109.5L27 109.5L28 109.5L28 109.5L29 109.5L29 109.5L30 109.5L30 109.5L31 109.5L31 109.5L32 109.5L32 109.5L33 109.5L33 109.5L34 109.5L34 109.5L35 109.5L35 109.5L36 109.5L36 109.5L37 109.5L37 109.5L38 109.5L38 109.5L39 109.5L39 109.5L40 109.5L40 109.5L41 109.5L41 109.5L42 109.5L42 109.5L43 109.5L43 109.5L44 109.5L44 109.5L45 109.5L45 109.5L46 109.5L46 109.5L47 109.5L47 109.5L48 109.5L48 109.5L49 109.5L49 109.5L50 109.5L50 109.5L51 109.5L51 109.5L52 109.5L52 109.5L53 109.5L53 109.5L54 109.5L54 109.5L55 109.5L55 109.5L56 109.5L56 109.5L57 109.5L57 109.5L58 109.5L58 109.5L59 109.5L59 109.5L60 109.5L60 109.5L61 109.5L61 109.5L62 109.5L62 109.5L63 109.5L63 109.5L64 109.5L64 109.5L65 109.5L65 109.5L66 109.5L66 109.5L67 109.5L67 109.5L68 109.5L68 109.5L69 109.5L69 109.5L70 109.5L70 109.5L71 109.5L71 109.5L72 109.5L72 109.5L73 109.5L73 109.5L74 109.5L74 109.5L75 109.5L75 109.5L76 109.5L76 109.5L77 109.5L77 109.5L78 109.5L78 109.5L79 109.5L79 109.5L80 109.5L80 109.5L81 109.5L81 109.5L82 109.5L82 109.5L83 109.5L83 109.5L84 109.5L84 109.5L85 109.5L85 109.5L86 109.5L86 109.5L87 109.5L87 109.5L88 109.5L88 109.5L89 109.5L89 109.5L90 109.5L90 109.5L91 109.5L91 109.5L92 109.5L92 109.5L93 109.5L93 109.5L94 109.5L94 109.5L95 109.5L95 92.3L96 92.3L96 90.9L97 90.9L97 105.1L98 105.1L98 105.0L99 105.0L99 107.5L100 107.5L100 84.5L101 84.5L101 95.6L102 95.6L102 101.0L103 101.0L103 100.9L104 100.9L104 100.4L105 100.4L105 107.5L106 107.5L106 107.4L107 107.4L107 95.2L108 95.2L108 97.4L109 97.4L109 96.0L110 96.0L110 108.1L111 108.1L111 107.9L112 107.9L112 97.8L113 97.8L113 106.2L114 106.2L114 106.1L115 106.1L115 104.5L116 104.5L116 104.2L117 104.2L117 76.4L118 76.4L118 97.0L119 97.0L119 87.7L120 87.7L120 103.9L121 103.9L121 94.2L122 94.2L122 72.2L123 72.2L123 84.9L124 84.9L124 77.1L125 77.1L125 107.9L126 107.9L126 107.7L127 107.7L127 96.4L128 96.4L128 89.9L129 89.9L129 92.0L130 92.0L130 94.3L131 94.3L131 89.2L132 89.2L132 89.5L133 89.5L133 96.6L134 96.6L134 92.9L135 92.9L135 108.6L136 108.6L136 108.5L137 108.5L137 88.0L138 88.0L138 88.5L139 88.5L139 98.2L140 98.2L140 90.3L141 90.3L141 83.7L142 83.7L142 93.3L143 93.3L143 91.7L144 91.7L144 105.5L145 105.5L145 105.5L146 105.5L146 95.1L147 95.1L147 91.1L148 91.1L148 94.3L149 94.3L149 91.5L150 91.5L150 88.9L151 88.9L151 104.7L152 104.7L152 88.7L153 88.7L153 87.3L154 87.3L154 76.3L155 76.3L155 86.5L156 86.5L156 93.2L157 93.2L157 85.5L158 85.5L158 87.0L159 87.0L159 93.4L160 93.4L160 93.1L161 93.1L161 94.7L162 94.7L162 95.1L163 95.1L163 92.8L164 92.8L164 93.2L165 93.2L165 92.8L166 92.8L166 91.5L167 91.5L167 100.1L168 100.1L168 100.5L169 100.5L169 88.2L170 88.2L170 106.8L171 106.8L171 96.2L172 96.2L172 96.4L173 96.4L173 90.3L174 90.3L174 88.5L175 88.5L175 96.9L176 96.9L176 93.5L177 93.5L177 93.1L178 93.1L178 96.4L179 96.4L179 90.0L180 90.0L180 91.0L181 91.0L181 99.3L182 99.3L182 104.0L183 104.0L183 104.2L184 104.2L184 104.8L185 104.8L185 104.4L186 104.4L186 91.6L187 91.6L187 105.2L188 105.2L188 90.5L189 90.5L189 92.7L190 92.7L190 83.4L191 83.4L191 77.4L192 77.4L192 102.6L193 102.6L193 84.0L194 84.0L194 83.1L195 83.1L195 88.3L196 88.3L196 68.9L197 68.9L197 87.6L198 87.6L198 85.6L199 85.6L199 105.6L200 105.6L200 86.1L201 86.1L201 89.1L202 89.1L202 83.4L203 83.4L203 89.9L204 89.9L204 76.5L205 76.5L205 93.3L206 93.3L206 92.9L207 92.9L207 92.5L208 92.5L208 93.3L209 93.3L209 105.8L210 105.8L210 105.7L211 105.7L211 87.1L212 87.1L212 105.3L213 105.3L213 105.6L214 105.6L214 93.2L215 93.2L215 89.9L216 89.9L216 92.8L217 92.8L217 98.1L218 98.1L218 96.9L219 96.9L219 80.2L220 80.2L220 105.8L221 105.8L221 106.1L222 106.1L222 99.3L223 99.3L223 97.8L224 97.8L224 107.7L225 107.7L225 87.6L226 87.6L226 103.8L227 103.8L227 91.0L228 91.0L228 88.5L229 88.5L229 90.1L230 90.1L230 96.5L231 96.5L231 87.5L232 87.5L232 96.8L233 96.8L233 88.4L234 88.4L234 108.5L235 108.5L235 106.8L236 106.8L236 107.0L237 107.0L237 100.2L238 100.2L238 99.9L239 99.9L239 106.1L240 106.1L240 106.0L241 106.0L241 106.6L242 106.6L242 106.5L243 106.5L243 108.7L244 108.7L244 95.9L245 95.9L245 95.8L246 95.8L246 89.9L247 89.9L247 92.9L248 92.9L248 104.3L249 104.3L249 104.3L250 104.3L250 94.9L251 94.9L251 94.4L252 94.4L252 104.9L253 104.9L253 86.7L254 86.7L254 88.0L255 88.0L255 103.0L256 103.0L256 103.1L257 103.1L257 83.9L258 83.9L258 85.8L259 85.8L259 93.1L260 93.1L260 93.7L261 93.7L261 96.3L262 96.3L262 95.7L263 95.7L263 90.6L264 90.6L264 91.9L265 91.9L265 97.4L266 97.4L266 97.9L267 97.9L267 67.3L268 67.3L268 106.9L269 106.9L269 106.7L270 106.7L270 90.2L271 90.2L271 90.3L272 90.3L272 96.2L273 96.2L273 98.5L274 98.5L274 88.7L275 88.7L275 88.5L276 88.5L276 91.9L277 91.9L277 84.8L278 84.8L278 86.6L279 86.6L279 77.9L280 77.9L280 105.4L281 105.4L281 79.6L282 79.6L282 92.5L283 92.5L283 95.6L284 95.6L284 98.9L285 98.9L285 101.6L286 101.6L286 109.5L287 109.5L287 109.5L288 109.5L288 109.5L289 109.5L289 109.5L290 109.5L290 109.5L291 109.5L291 109.5L292 109.5L292 109.5L293 109.5L293 109.5L294 109.5L294 109.5L295 109.5L295 109.5L296 109.5L296 109.5L297 109.5L297 109.5L298 109.5L298 109.5L299 109.5L299 109.5L300 109.5L300 109.5L301 109.5L301 104.0L302 104.0L302 88.3L303 88.3L303 99.8L304 99.8L304 98.1L305 98.1L305 93.7L306 93.7L306 104.0L307 104.0L307 103.0L308 103.0L308 87.1L309 87.1L309 95.8L310 95.8L310 106.1L311 106.1L311 94.4L312 94.4L312 93.2L313 93.2L313 95.2L314 95.2L314 96.5L315 96.5L315 102.6L316 102.6L316 102.1L317 102.1L317 85.4L318 85.4L318 94.8L319 94.8L319 94.5L320 94.5L320 106.8L321 106.8L321 104.7L322 104.7L322 82.4L323 82.4L323 79.0L324 79.0L324 90.4L325 90.4L325 108.0L326 108.0L326 94.6L327 94.6L327 87.2L328 87.2L328 85.1L329 85.1L329 98.2L330 98.2L330 77.5L331 77.5L331 91.9L332 91.9L332 94.6L333 94.6L333 99.2L334 99.2L334 93.8L335 93.8L335 94.2L336 94.2L336 94.6L337 94.6L337 93.0L338 93.0L338 94.7L339 94.7L339 95.7L340 95.7L340 94.7L341 94.7L341 97.3L342 97.3L342 97.8L343 97.8L343 101.4L344 101.4L344 100.3L345 100.3L345 90.0L346 90.0L346 91.0L347 91.0L347 94.5L348 94.5L348 89.8L349 89.8L349 107.7L350 107.7L350 107.8L351 107.8L351 98.1L352 98.1L352 99.6L353 99.6L353 104.5L354 104.5L354 103.9L355 103.9L355 104.1L356 104.1L356 104.1L357 104.1L357 90.9L358 90.9L358 91.1L359 91.1L359 75.6L360 75.6L360 87.7L361 87.7L361 87.0L362 87.0L362 84.9L363 84.9L363 84.6L364 84.6L364 84.6L365 84.6L365 96.4L366 96.4L366 97.3L367 97.3L367 89.9L368 89.9L368 93.2L369 93.2L369 97.4L370 97.4L370 108.5L371 108.5L371 108.4L372 108.4L372 96.2L373 96.2L373 96.2L374 96.2L374 97.2L375 97.2L375 106.9L376 106.9L376 76.2L377 76.2L377 85.2L378 85.2L378 85.1L379 85.1L379 91.1L380 91.1L380 97.8L381 97.8L381 89.7L382 89.7L382 92.4L383 92.4L383 70.3L384 70.3L384 79.0L385 79.0L385 85.8L386 85.8L386 85.0L387 85.0L387 83.0L388 83.0L388 78.2L389 78.2L389 103.6L390 103.6L390 82.0L391 82.0L391 86.4L392 86.4L392 98.3L393 98.3L393 100.2L394 100.2L394 107.5L395 107.5L395 109.5L396 109.5L396 109.5L397 109.5L397 109.5L398 109.5L398 109.5L399 109.5L399 109.5L400 109.5L400 109.5L401 109.5L401 109.5L402 109.5L402 109.5L403 109.5L403 109.5L404 109.5L404 109.5L405 109.5L405 109.5L406 109.5L406 100.3L407 100.3L407 100.2L408 100.2L408 90.7L409 90.7L409 100.1L410 100.1L410 100.0L411 100.0L411 100.9L412 100.9L412 100.2L413 100.2L413 98.2L414 98.2L414 103.1L415 103.1L415 105.0L416 105.0L416 105.2L417 105.2L417 99.7L418 99.7L418 95.2L419 95.2L419 94.7L420 94.7L420 89.1L421 89.1L421 98.2L422 98.2L422 88.2L423 88.2L423 102.4L424 102.4L424 75.5L425 75.5L425 78.3L426 78.3L426 86.6L427 86.6L427 84.6L428 84.6L428 85.0L429 85.0L429 85.9L430 85.9L430 90.4L431 90.4L431 107.0L432 107.0L432 106.8L433 106.8L433 87.2L434 87.2L434 104.0L435 104.0L435 104.3L436 104.3L436 97.2L437 97.2L437 90.7L438 90.7L438 105.6L439 105.6L439 96.3L440 96.3L440 94.6L441 94.6L441 96.2L442 96.2L442 98.9L443 98.9L443 91.4L444 91.4L444 93.1L445 93.1L445 99.7L446 99.7L446 99.0L447 99.0L447 100.6L448 100.6L448 94.9L449 94.9L449 94.5L450 94.5L450 94.4L451 94.4L451 100.8L452 100.8L452 101.4L453 101.4L453 96.4L454 96.4L454 108.0L455 108.0L455 107.7L456 107.7L456 91.1L457 91.1L457 92.3L458 92.3L458 95.9L459 95.9L459 96.6L460 96.6L460 79.8L461 79.8L461 94.4L462 94.4L462 94.5L463 94.5L463 95.7L464 95.7L464 84.6L465 84.6L465 95.1L466 95.1L466 96.3L467 96.3L467 99.2L468 99.2L468 89.4L469 89.4L469 103.7L470 103.7L470 103.4L471 103.4L471 78.2L472 78.2L472 85.0L473 85.0L473 101.0L474 101.0L474 105.0L475 105.0L475 109.5L476 109.5L476 109.5L477 109.5L477 109.5L478 109.5L478 109.5L479 109.5L479 109.5L480 109.5L480 109.5L481 109.5L481 109.5L482 109.5L482 109.5L483 109.5L483 109.5L484 109.5L484 109.5L485 109.5L485 109.5L486 109.5L486 109.5L487 109.5L487 109.5L488 109.5L488 109.5L489 109.5L489 109.5L490 109.5L490 109.5L491 109.5L491 109.5L492 109.5L492 109.5L493 109.5L493 109.5L494 109.5L494 109.5L495 109.5L495 109.5L496 109.5L496 109.5L497 109.5L497 109.5L498 109.5L498 109.5L499 109.5L499 109.5L500 109.5L500 109.5L501 109.5L501 109.5L502 109.5L502 98.5L503 98.5L503 97.9L504 97.9L504 93.8L505 93.8L505 90.7L506 90.7L506 98.0L507 98.0L507 91.9L508 91.9L508 79.0L509 79.0L509 85.2L510 85.2L510 94.6L511 94.6L511 92.5L512 92.5L512 91.3L513 91.3L513 85.0L514 85.0L514 93.3L515 93.3L515 93.8L516 93.8L516 104.6L517 104.6L517 104.8L518 104.8L518 83.8L519 83.8L519 76.5L520 76.5L520 90.7L521 90.7L521 86.7L522 86.7L522 87.2L523 87.2L523 104.8L524 104.8L524 105.3L525 105.3L525 95.7L526 95.7L526 93.2L527 93.2L527 95.4L528 95.4L528 92.5L529 92.5L529 99.7L530 99.7L530 106.7L531 106.7L531 106.1L532 106.1L532 108.5L533 108.5L533 108.5L534 108.5L534 107.2L535 107.2L535 99.5L536 99.5L536 99.1L537 99.1L537 90.4L538 90.4L538 89.4L539 89.4L539 89.7L540 89.7L540 86.0L541 86.0L541 82.7L542 82.7L542 88.2L543 88.2L543 87.6L544 87.6L544 108.2L545 108.2L545 89.4L546 89.4L546 106.3L547 106.3L547 106.3L548 106.3L548 92.7L549 92.7L549 90.1L550 90.1L550 107.6L551 107.6L551 95.8L552 95.8L552 94.7L553 94.7L553 100.2L554 100.2L554 96.3L555 96.3L555 95.5L556 95.5L556 96.9L557 96.9L557 96.7L558 96.7L558 95.3L559 95.3L559 105.2L560 105.2L560 104.8L561 104.8L561 99.7L562 99.7L562 94.4L563 94.4L563 92.0L564 92.0L564 92.6L565 92.6L565 93.8L566 93.8L566 98.5L567 98.5L567 93.8L568 93.8L568 93.8L569 93.8L569 98.9L570 98.9L570 98.4L571 98.4L571 104.3L572 104.3L572 104.6L573 104.6L573 92.3L574 92.3L574 100.8L575 100.8L575 109.5L576 109.5L576 109.5L577 109.5L577 109.5L578 109.5L578 109.5L579 109.5L579 109.5L580 109.5L580 109.5L581 109.5L581 109.5L582 109.5L582 109.5L583 109.5L583 109.5L584 109.5L584 109.5L585 109.5L585 109.5L586 109.5L586 109.5L587 109.5L587 109.5L588 109.5L588 109.5L589 109.5L589 108.4L590 108.4L590 108.4L591 108.4L591 95.5L592 95.5L592 61.5L593 61.5L593 83.1L594 83.1L594 91.5L595 91.5L595 105.8L596 105.8L596 105.3L597 105.3L597 90.5L598 90.5L598 92.0L599 92.0L599 93.8L600 93.8L600 93.8L601 93.8L601 93.9L602 93.9L602 81.1L603 81.1L603 94.4L604 94.4L604 90.5L605 90.5L605 80.1L606 80.1L606 81.6L607 81.6L607 87.3L608 87.3L608 85.4L609 85.4L609 106.4L610 106.4L610 106.4L611 106.4L611 84.0L612 84.0L612 89.0L613 89.0L613 105.3L614 105.3L614 89.7L615 89.7L615 89.7L616 89.7L616 92.3L617 92.3L617 95.6L618 95.6L618 96.5L619 96.5L619 96.9L620 96.9L620 101.1L621 101.1L621 101.0L622 101.0L622 89.7L623 89.7L623 97.5L624 97.5L624 95.7L625 95.7L625 99.3L626 99.3L626 96.0L627 96.0L627 94.9L628 94.9L628 88.9L629 88.9L629 88.5L630 88.5L630 95.9L631 95.9L631 97.1L632 97.1L632 95.9L633 95.9L633 97.1L634 97.1L634 106.0L635 106.0L635 105.6L636 105.6L636 89.6L637 89.6L637 90.4L638 90.4L638 91.0L639 91.0L639 104.3L640 104.3L640 90.1L641 90.1L641 95.4L642 95.4L642 95.6L643 95.6L643 94.5L644 94.5L644 91.8L645 91.8L645 81.2L646 81.2L646 93.3L647 93.3L647 91.2L648 91.2L648 96.6L649 96.6L649 96.0L650 96.0L650 97.2L651 97.2L651 96.4L652 96.4L652 104.1L653 104.1L653 93.5L654 93.5L654 95.1L655 95.1L655 98.0L656 98.0L656 90.7L657 90.7L657 80.5L658 80.5L658 85.5L659 85.5L659 86.8L660 86.8L660 94.7L661 94.7L661 97.9L662 97.9L662 90.4L663 90.4L663 70.3L664 70.3L664 108.1L665 108.1L665 108.1L666 108.1L666 90.3L667 90.3L667 89.5L668 89.5L668 84.3L669 84.3L669 87.4L670 87.4L670 107.7L671 107.7L671 107.9L672 107.9L672 102.2L673 102.2L673 102.8L674 102.8L674 95.2L675 95.2L675 91.0L676 91.0L676 105.3L677 105.3L677 104.0L678 104.0L678 109.5L679 109.5L679 109.5L680 109.5L680 109.5L681 109.5L681 109.5L682 109.5L682 109.5L683 109.5L683 109.5L684 109.5L684 109.5L685 109.5L685 109.5L686 109.5L686 109.5L687 109.5L687 106.7L688 106.7L688 106.9L689 106.9L689 89.5L690 89.5L690 86.8L691 86.8L691 77.3L692 77.3L692 88.5L693 88.5L693 79.8L694 79.8L694 100.5L695 100.5L695 99.7L696 99.7L696 85.2L697 85.2L697 94.9L698 94.9L698 92.1L699 92.1L699 87.8L700 87.8L700 84.7L701 84.7L701 105.1L702 105.1L702 89.9L703 89.9L703 91.6L704 91.6L704 94.7L705 94.7L705 92.8L706 92.8L706 93.9L707 93.9L707 86.3L708 86.3L708 88.5L709 88.5L709 107.9L710 107.9L710 107.9L711 107.9L711 99.0L712 99.0L712 87.7L713 87.7L713 108.4L714 108.4L714 93.3L715 93.3L715 89.9L716 89.9L716 88.5L717 88.5L717 78.6L718 78.6L718 100.3L719 100.3L719 101.7L720 101.7L720 96.7L721 96.7L721 97.2L722 97.2L722 96.8L723 96.8L723 93.6L724 93.6L724 94.3L725 94.3L725 100.0L726 100.0L726 106.4L727 106.4L727 106.5L728 106.5L728 107.6L729 107.6L729 107.6L730 107.6L730 99.3L731 99.3L731 100.4L732 100.4L732 87.7L733 87.7L733 98.3L734 98.3L734 96.6L735 96.6L735 94.3L736 94.3L736 97.8L737 97.8L737 97.6L738 97.6L738 86.0L739 86.0L739 98.5L740 98.5L740 99.1L741 99.1L741 86.5L742 86.5L742 84.1L743 84.1L743 106.3L744 106.3L744 106.7L745 106.7L745 93.9L746 93.9L746 91.7L747 91.7L747 89.0L748 89.0L748 88.3L749 88.3L749 76.5L750 76.5L750 84.4L751 84.4L751 86.6L752 86.6L752 85.9L753 85.9L753 97.6L754 97.6L754 90.8L755 90.8L755 87.6L756 87.6L756 86.8L757 86.8L757 87.2L758 87.2L758 98.9L759 98.9L759 98.0L760 98.0L760 92.0L761 92.0L761 90.1L762 90.1L762 107.9L763 107.9L763 108.2L764 108.2L764 97.3L765 97.3L765 96.5L766 96.5L766 94.3L767 94.3L767 92.6L768 92.6L768 91.2L769 91.2L769 96.8L770 96.8L770 96.2L771 96.2L771 82.6L772 82.6L772 103.3L773 103.3L773 102.8L774 102.8L774 108.5L775 108.5L775 108.5L776 108.5L776 79.3L777 79.3L777 107.6L778 107.6L778 107.6L779 107.6L779 107.1L780 107.1L780 84.0L781 84.0L781 105.5L782 105.5L782 105.4L783 105.4L783 91.1L784 91.1L784 92.0L785 92.0L785 90.9L786 90.9L786 77.2L787 77.2L787 77.2L788 77.2L788 88.5L789 88.5L789 90.4L790 90.4L790 90.4L791 90.4L791 93.3L792 93.3L792 104.3L793 104.3L793 69.5L794 69.5L794 87.5L795 87.5L795 96.2L796 96.2L796 100.4L797 100.4L797 101.8L798 101.8L798 102.5L799 102.5L799 109.0L800 109.0L800 109.5L801 109.5L801 109.5L802 109.5L802 109.5L803 109.5L803 109.5L804 109.5L804 109.5L805 109.5L805 109.5L806 109.5L806 109.5L807 109.5L807 109.5L808 109.5L808 109.5L809 109.5L809 109.5L810 109.5L810 109.5L811 109.5L811 109.5L812 109.5L812 109.5L813 109.5L813 109.5L814 109.5L814 105.9L815 105.9L815 89.2L816 89.2L816 97.9L817 97.9L817 89.5L818 89.5L818 81.3L819 81.3L819 90.4L820 90.4L820 91.7L821 91.7L821 99.4L822 99.4L822 98.1L823 98.1L823 98.6L824 98.6L824 95.6L825 95.6L825 96.6L826 96.6L826 101.3L827 101.3L827 101.7L828 101.7L828 95.7L829 95.7L829 99.0L830 99.0L830 100.1L831 100.1L831 96.7L832 96.7L832 95.2L833 95.2L833 107.8L834 107.8L834 100.0L835 100.0L835 75.5L836 75.5L836 89.0L837 89.0L837 105.6L838 105.6L838 77.7L839 77.7L839 86.6L840 86.6L840 89.2L841 89.2L841 98.6L842 98.6L842 81.0L843 81.0L843 76.4L844 76.4L844 104.3L845 104.3L845 104.0L846 104.0L846 79.0L847 79.0L847 104.7L848 104.7L848 93.7L849 93.7L849 76.7L850 76.7L850 80.8L851 80.8L851 91.0L852 91.0L852 88.5L853 88.5L853 89.3L854 89.3L854 99.1L855 99.1L855 96.6L856 96.6L856 103.9L857 103.9L857 109.5L858 109.5L858 109.5L859 109.5L859 109.5L860 109.5L860 109.5L861 109.5L861 109.5L862 109.5L862 109.5L863 109.5L863 109.5L864 109.5L864 109.5L865 109.5L865 109.5L866 109.5L866 109.5L867 109.5L867 109.5L868 109.5L868 109.5L869 109.5L869 109.5L870 109.5L870 109.5L871 109.5L871 109.5L872 109.5L872 109.5L873 109.5L873 109.5L874 109.5L874 109.5L875 109.5L875 109.5L876 109.5L876 109.5L877 109.5L877 109.5L878 109.5L878 92.0L879 92.0L879 92.1L880 92.1L880 87.5L881 87.5L881 86.8L882 86.8L882 106.6L883 106.6L883 106.6L884 106.6L884 89.5L885 89.5L885 83.0L886 83.0L886 97.2L887 97.2L887 97.9L888 97.9L888 104.9L889 104.9L889 104.9L890 104.9L890 91.1L891 91.1L891 96.2L892 96.2L892 96.9L893 96.9L893 101.3L894 101.3L894 101.9L895 101.9L895 91.3L896 91.3L896 96.6L897 96.6L897 97.1L898 97.1L898 102.1L899 102.1L899 106.9L900 106.9L900 106.5L901 106.5L901 92.1L902 92.1L902 93.2L903 93.2L903 86.3L904 86.3L904 94.6L905 94.6L905 93.8L906 93.8L906 104.6L907 104.6L907 104.3L908 104.3L908 100.3L909 100.3L909 94.9L910 94.9L910 92.7L911 92.7L911 91.6L912 91.6L912 87.9L913 87.9L913 87.4L914 87.4L914 90.4L915 90.4L915 93.4L916 93.4L916 90.0L917 90.0L917 92.9L918 92.9L918 91.9L919 91.9L919 103.4L920 103.4L920 95.9L921 95.9L921 99.0L922 99.0L922 103.5L923 103.5L923 98.6L924 98.6L924 97.9L925 97.9L925 87.1L926 87.1L926 104.8L927 104.8L927 83.7L928 83.7L928 94.8L929 94.8L929 94.7L930 94.7L930 76.8L931 76.8L931 87.1L932 87.1L932 89.9L933 89.9L933 92.9L934 92.9L934 89.3L935 89.3L935 96.6L936 96.6L936 107.9L937 107.9L937 103.8L938 103.8L938 104.3L939 104.3L939 93.8L940 93.8L940 99.1L941 99.1L941 99.5L942 99.5L942 91.3L943 91.3L943 97.0L944 97.0L944 88.6L945 88.6L945 86.4L946 86.4L946 89.5L947 89.5L947 91.7L948 91.7L948 97.4L949 97.4L949 98.7L950 98.7L950 107.3L951 107.3L951 96.7L952 96.7L952 98.3L953 98.3L953 98.2L954 98.2L954 83.4L955 83.4L955 83.5L956 83.5L956 87.3L957 87.3L957 88.7L958 88.7L958 84.5L959 84.5L959 89.6L960 89.6L960 86.8L961 86.8L961 108.0L962 108.0L962 108.0L963 108.0L963 90.3L964 90.3L964 102.3L965 102.3L965 93.3L966 93.3L966 92.1L967 92.1L967 90.0L968 90.0L968 86.8L969 86.8L969 107.7L970 107.7L970 96.9L971 96.9L971 103.5L972 103.5L972 109.5L973 109.5L973 109.5L974 109.5L974 109.5L975 109.5L975 109.5L976 109.5L976 109.5L977 109.5L977 109.5L978 109.5L978 109.5L979 109.5L979 109.5L980 109.5L980 109.5L981 109.5L981 109.5L982 109.5L982 109.5L983 109.5L983 109.5L984 109.5L984 109.5L985 109.5L985 109.5L986 109.5L986 109.5L987 109.5L987 109.5L988 109.5L988 109.5L989 109.5L989 109.5L990 109.5L990 109.5L991 109.5L991 61.5L992 61.5L992 80.8L993 80.8L993 104.4L994 104.4L994 91.3L995 91.3L995 88.9L996 88.9L996 101.1L997 101.1L997 90.6L998 90.6L998 102.6L999 102.6L999 95.3L1000 95.3L1000 92.5L1001 92.5L1001 108.8L1002 108.8L1002 108.9L1003 108.9L1003 96.8L1004 96.8L1004 95.5L1005 95.5L1005 108.3L1006 108.3L1006 108.2L1007 108.2L1007 91.0L1008 91.0L1008 88.2L1009 88.2L1009 89.6L1010 89.6L1010 86.5L1011 86.5L1011 93.8L1012 93.8L1012 91.1L1013 91.1L1013 98.7L1014 98.7L1014 91.4L1015 91.4L1015 91.5L1016 91.5L1016 93.0L1017 93.0L1017 92.0L1018 92.0L1018 96.7L1019 96.7L1019 92.4L1020 92.4L1020 104.5L1021 104.5L1021 105.0L1022 105.0L1022 77.5L1023 77.5L1023 81.6L1024 81.6L1024 85.2L1025 85.2L1025 86.5L1026 86.5L1026 87.7L1027 87.7L1027 90.6L1028 90.6L1028 90.8L1029 90.8L1029 86.0L1030 86.0L1030 86.1L1031 86.1L1031 103.5L1032 103.5L1032 104.3L1033 104.3L1033 86.4L1034 86.4L1034 85.6L1035 85.6L1035 93.1L1036 93.1L1036 107.1L1037 107.1L1037 107.4L1038 107.4L1038 104.3L1039 104.3L1039 104.7L1040 104.7L1040 104.6L1041 104.6L1041 94.3L1042 94.3L1042 79.8L1043 79.8L1043 93.7L1044 93.7L1044 84.8L1045 84.8L1045 90.2L1046 90.2L1046 90.4L1047 90.4L1047 104.9L1048 104.9L1048 76.5L1049 76.5L1049 74.8L1050 74.8L1050 95.0L1051 95.0L1051 92.6L1052 92.6L1052 108.1L1053 108.1L1053 94.2L1054 94.2L1054 94.1L1055 94.1L1055 94.2L1056 94.2L1056 92.6L1057 92.6L1057 90.1L1058 90.1L1058 88.2L1059 88.2L1059 89.9L1060 89.9L1060 90.6L1061 90.6L1061 108.3L1062 108.3L1062 107.9L1063 107.9L1063 108.0L1064 108.0L1064 85.2L1065 85.2L1065 108.6L1066 108.6L1066 106.4L1067 106.4L1067 106.8L1068 106.8L1068 107.6L1069 107.6L1069 65.5L1070 65.5L1070 85.3L1071 85.3L1071 104.3L1072 104.3L1072 109.5L1073 109.5L1073 109.5L1074 109.5L1074 109.5L1075 109.5L1075 109.5L1076 109.5L1076 109.5L1077 109.5L1077 109.5L1078 109.5L1078 109.5L1079 109.5L1079 109.5L1080 109.5L1080 109.5L1081 109.5L1081 108.5L1082 108.5L1082 108.5L1083 108.5L1083 90.6L1084 90.6L1084 87.3L1085 87.3L1085 88.5L1086 88.5L1086 98.7L1087 98.7L1087 98.5L1088 98.5L1088 108.5L1089 108.5L1089 94.5L1090 94.5L1090 93.8L1091 93.8L1091 98.4L1092 98.4L1092 99.6L1093 99.6L1093 88.4L1094 88.4L1094 88.4L1095 88.4L1095 84.6L1096 84.6L1096 88.4L1097 88.4L1097 95.8L1098 95.8L1098 95.2L1099 95.2L1099 87.6L1100 87.6L1100 88.4L1101 88.4L1101 95.6L1102 95.6L1102 94.6L1103 94.6L1103 94.2L1104 94.2L1104 93.1L1105 93.1L1105 95.2L1106 95.2L1106 95.7L1107 95.7L1107 92.8L1108 92.8L1108 91.3L1109 91.3L1109 105.0L1110 105.0L1110 105.2L1111 105.2L1111 105.5L1112 105.5L1112 105.5L1113 105.5L1113 106.1L1114 106.1L1114 106.4L1115 106.4L1115 99.0L1116 99.0L1116 106.9L1117 106.9L1117 106.7L1118 106.7L1118 95.5L1119 95.5L1119 99.6L1120 99.6L1120 100.4L1121 100.4L1121 97.3L1122 97.3L1122 96.1L1123 96.1L1123 95.6L1124 95.6L1124 99.0L1125 99.0L1125 104.6L1126 104.6L1126 90.0L1127 90.0L1127 97.7L1128 97.7L1128 104.0L1129 104.0L1129 109.5L1130 109.5L1130 109.5L1131 109.5L1131 109.5Z" fill="#1575d9"/>
<rect x="0" y="108.800" width="1131" height="2.400" fill="#1575d9"/>
<rect x="2" y="87.900" width="1127" height="1.700" fill="#7a9bc6"/><rect x="2" y="89.600" width="1127" height="1" fill="#03234d"/>
<g fill="none" stroke="#e8eef8" stroke-width="1.100"><rect x="4.500" y="5.500" width="9" height="7.200" rx="1"/><path d="M13.500 8L17.300 5.800V12.400L13.500 10.200"/></g>
</svg>
<span class="t" style="transform:scaleX(0.9143);left:24.97px;top:4.500px;font-size:11.500px;color:#fff">４条・５条</span>
</div>
<div class="abs" style="left:1548px;top:239px;width:119px;height:115px;background:#06407f;border-radius:3px;overflow:hidden">
<svg style="left:0;top:0" width="119" height="115">
<rect x="0" y="17" width="119" height="27" fill="url(#thm)"/>
<use href="#av" x="44.0" y="39.800"/>
<use href="#av" x="92.0" y="39.800"/>
<path d="M2 19.500H117" stroke="#2a2a30" stroke-width="1" fill="none"/>
<path d="M0 109.5L0 109.5L1 109.5L1 109.5L2 109.5L2 109.5L3 109.5L3 109.5L4 109.5L4 109.5L5 109.5L5 109.5L6 109.5L6 109.5L7 109.5L7 109.5L8 109.5L8 109.5L9 109.5L9 109.5L10 109.5L10 109.5L11 109.5L11 109.5L12 109.5L12 74.9L13 74.9L13 87.6L14 87.6L14 104.2L15 104.2L15 106.2L16 106.2L16 101.2L17 101.2L17 100.0L18 100.0L18 103.5L19 103.5L19 73.3L20 73.3L20 76.2L21 76.2L21 93.7L22 93.7L22 72.2L23 72.2L23 97.7L24 97.7L24 97.7L25 97.7L25 106.4L26 106.4L26 96.5L27 96.5L27 97.3L28 97.3L28 96.4L29 96.4L29 98.8L30 98.8L30 102.4L31 102.4L31 101.7L32 101.7L32 84.9L33 84.9L33 81.5L34 81.5L34 81.5L35 81.5L35 80.6L36 80.6L36 90.9L37 90.9L37 87.1L38 87.1L38 105.3L39 105.3L39 105.7L40 105.7L40 68.8L41 68.8L41 91.3L42 91.3L42 90.2L43 90.2L43 90.6L44 90.6L44 66.7L45 66.7L45 82.4L46 82.4L46 82.6L47 82.6L47 99.6L48 99.6L48 90.2L49 90.2L49 93.4L50 93.4L50 97.4L51 97.4L51 102.1L52 102.1L52 96.3L53 96.3L53 95.8L54 95.8L54 91.8L55 91.8L55 101.0L56 101.0L56 102.1L57 102.1L57 99.7L58 99.7L58 98.2L59 98.2L59 97.9L60 97.9L60 96.9L61 96.9L61 98.2L62 98.2L62 93.7L63 93.7L63 106.7L64 106.7L64 97.5L65 97.5L65 97.9L66 97.9L66 96.9L67 96.9L67 96.6L68 96.6L68 90.2L69 90.2L69 90.2L70 90.2L70 96.6L71 96.6L71 91.6L72 91.6L72 91.5L73 91.5L73 100.6L74 100.6L74 100.1L75 100.1L75 87.3L76 87.3L76 106.5L77 106.5L77 94.0L78 94.0L78 88.6L79 88.6L79 104.8L80 104.8L80 105.0L81 105.0L81 97.6L82 97.6L82 95.7L83 95.7L83 98.4L84 98.4L84 102.0L85 102.0L85 101.3L86 101.3L86 103.2L87 103.2L87 103.6L88 103.6L88 103.6L89 103.6L89 103.9L90 103.9L90 105.1L91 105.1L91 107.8L92 107.8L92 94.0L93 94.0L93 92.9L94 92.9L94 92.6L95 92.6L95 100.1L96 100.1L96 95.3L97 95.3L97 96.0L98 96.0L98 90.1L99 90.1L99 108.9L100 108.9L100 109.0L101 109.0L101 107.3L102 107.3L102 107.4L103 107.4L103 92.2L104 92.2L104 106.2L105 106.2L105 109.5L106 109.5L106 109.5L107 109.5L107 109.5L108 109.5L108 109.5L109 109.5L109 109.5L110 109.5L110 109.5L111 109.5L111 109.5L112 109.5L112 109.5L113 109.5L113 109.5L114 109.5L114 109.5L115 109.5L115 109.5L116 109.5L116 109.5L117 109.5L117 109.5L118 109.5L118 109.5L119 109.5L119 109.5Z" fill="#1575d9"/>
<rect x="0" y="108.800" width="119" height="2.400" fill="#1575d9"/>
<rect x="2" y="87.900" width="115" height="1.700" fill="#7a9bc6"/><rect x="2" y="89.600" width="115" height="1" fill="#03234d"/>
<g fill="none" stroke="#e8eef8" stroke-width="1.100"><rect x="4.500" y="5.500" width="9" height="7.200" rx="1"/><path d="M13.500 8L17.300 5.800V12.400L13.500 10.200"/></g>
</svg>
<span class="t" style="transform:scaleX(0.9143);left:24.97px;top:4.500px;font-size:11.500px;color:#fff">４条・５条</span>
</div>
<div class="abs" style="left:1669px;top:239px;width:231px;height:115px;background:#06407f;border-radius:3px;overflow:hidden">
<svg style="left:0;top:0" width="231" height="115">
<rect x="0" y="17" width="231" height="27" fill="url(#thm)"/>
<use href="#av" x="44.0" y="39.800"/>
<use href="#av" x="92.0" y="39.800"/>
<use href="#av" x="140.0" y="39.800"/>
<use href="#av" x="188.0" y="39.800"/>
<path d="M2 19.500H229" stroke="#2a2a30" stroke-width="1" fill="none"/>
<path d="M0 109.5L0 109.5L1 109.5L1 109.5L2 109.5L2 109.5L3 109.5L3 109.5L4 109.5L4 109.5L5 109.5L5 109.5L6 109.5L6 109.5L7 109.5L7 109.5L8 109.5L8 109.5L9 109.5L9 109.5L10 109.5L10 109.5L11 109.5L11 109.5L12 109.5L12 109.5L13 109.5L13 97.2L14 97.2L14 89.3L15 89.3L15 89.0L16 89.0L16 105.9L17 105.9L17 106.3L18 106.3L18 108.4L19 108.4L19 75.0L20 75.0L20 85.0L21 85.0L21 94.0L22 94.0L22 94.3L23 94.3L23 78.6L24 78.6L24 103.3L25 103.3L25 106.3L26 106.3L26 106.2L27 106.2L27 85.6L28 85.6L28 83.7L29 83.7L29 77.0L30 77.0L30 88.7L31 88.7L31 86.4L32 86.4L32 102.7L33 102.7L33 87.2L34 87.2L34 90.6L35 90.6L35 85.0L36 85.0L36 85.5L37 85.5L37 103.1L38 103.1L38 103.1L39 103.1L39 82.0L40 82.0L40 96.2L41 96.2L41 95.9L42 95.9L42 88.6L43 88.6L43 90.7L44 90.7L44 100.4L45 100.4L45 100.0L46 100.0L46 91.1L47 91.1L47 93.1L48 93.1L48 95.8L49 95.8L49 95.4L50 95.4L50 91.8L51 91.8L51 84.8L52 84.8L52 85.3L53 85.3L53 107.8L54 107.8L54 107.9L55 107.9L55 96.1L56 96.1L56 97.2L57 97.2L57 105.7L58 105.7L58 88.1L59 88.1L59 87.2L60 87.2L60 94.6L61 94.6L61 92.8L62 92.8L62 96.6L63 96.6L63 84.0L64 84.0L64 88.9L65 88.9L65 86.8L66 86.8L66 90.3L67 90.3L67 100.5L68 100.5L68 100.5L69 100.5L69 82.9L70 82.9L70 96.2L71 96.2L71 108.8L72 108.8L72 108.7L73 108.7L73 106.7L74 106.7L74 106.2L75 106.2L75 108.5L76 108.5L76 86.4L77 86.4L77 88.7L78 88.7L78 103.6L79 103.6L79 90.9L80 90.9L80 87.9L81 87.9L81 82.8L82 82.8L82 92.8L83 92.8L83 93.2L84 93.2L84 105.9L85 105.9L85 101.6L86 101.6L86 101.5L87 101.5L87 89.0L88 89.0L88 92.1L89 92.1L89 92.3L90 92.3L90 106.5L91 106.5L91 90.6L92 90.6L92 91.2L93 91.2L93 72.9L94 72.9L94 108.3L95 108.3L95 82.1L96 82.1L96 75.6L97 75.6L97 95.2L98 95.2L98 95.6L99 95.6L99 94.6L100 94.6L100 92.5L101 92.5L101 93.4L102 93.4L102 95.2L103 95.2L103 107.4L104 107.4L104 107.6L105 107.6L105 92.9L106 92.9L106 94.0L107 94.0L107 77.8L108 77.8L108 89.4L109 89.4L109 90.8L110 90.8L110 90.6L111 90.6L111 92.2L112 92.2L112 96.5L113 96.5L113 98.0L114 98.0L114 98.2L115 98.2L115 82.9L116 82.9L116 81.8L117 81.8L117 77.7L118 77.7L118 77.8L119 77.8L119 85.5L120 85.5L120 104.4L121 104.4L121 85.3L122 85.3L122 86.0L123 86.0L123 97.2L124 97.2L124 95.9L125 95.9L125 107.8L126 107.8L126 108.0L127 108.0L127 95.3L128 95.3L128 80.3L129 80.3L129 93.3L130 93.3L130 105.4L131 105.4L131 109.5L132 109.5L132 109.5L133 109.5L133 104.7L134 104.7L134 105.1L135 105.1L135 96.2L136 96.2L136 95.4L137 95.4L137 108.3L138 108.3L138 106.9L139 106.9L139 87.6L140 87.6L140 84.1L141 84.1L141 89.9L142 89.9L142 93.9L143 93.9L143 93.5L144 93.5L144 94.4L145 94.4L145 91.7L146 91.7L146 90.9L147 90.9L147 89.6L148 89.6L148 87.2L149 87.2L149 87.4L150 87.4L150 85.8L151 85.8L151 83.5L152 83.5L152 97.2L153 97.2L153 95.5L154 95.5L154 94.5L155 94.5L155 98.5L156 98.5L156 92.7L157 92.7L157 105.8L158 105.8L158 97.5L159 97.5L159 98.7L160 98.7L160 92.9L161 92.9L161 104.0L162 104.0L162 94.5L163 94.5L163 93.9L164 93.9L164 96.7L165 96.7L165 96.1L166 96.1L166 105.0L167 105.0L167 104.7L168 104.7L168 79.8L169 79.8L169 81.4L170 81.4L170 93.1L171 93.1L171 91.3L172 91.3L172 88.0L173 88.0L173 91.6L174 91.6L174 95.8L175 95.8L175 95.2L176 95.2L176 108.3L177 108.3L177 108.4L178 108.4L178 96.0L179 96.0L179 89.7L180 89.7L180 108.7L181 108.7L181 109.5L182 109.5L182 109.5L183 109.5L183 109.5L184 109.5L184 106.5L185 106.5L185 86.0L186 86.0L186 106.2L187 106.2L187 105.8L188 105.8L188 85.3L189 85.3L189 92.5L190 92.5L190 94.0L191 94.0L191 86.0L192 86.0L192 89.6L193 89.6L193 89.5L194 89.5L194 102.9L195 102.9L195 93.8L196 93.8L196 94.8L197 94.8L197 107.1L198 107.1L198 98.1L199 98.1L199 96.0L200 96.0L200 95.8L201 95.8L201 92.4L202 92.4L202 105.0L203 105.0L203 109.5L204 109.5L204 109.5L205 109.5L205 109.5L206 109.5L206 109.5L207 109.5L207 87.2L208 87.2L208 87.0L209 87.0L209 89.4L210 89.4L210 92.2L211 92.2L211 95.3L212 95.3L212 96.5L213 96.5L213 90.4L214 90.4L214 105.3L215 105.3L215 104.5L216 104.5L216 97.0L217 97.0L217 105.8L218 105.8L218 105.8L219 105.8L219 109.5L220 109.5L220 109.5L221 109.5L221 109.5L222 109.5L222 109.5L223 109.5L223 109.5L224 109.5L224 109.5L225 109.5L225 109.5L226 109.5L226 109.5L227 109.5L227 109.5L228 109.5L228 109.5L229 109.5L229 109.5L230 109.5L230 109.5L231 109.5L231 109.5Z" fill="#1575d9"/>
<rect x="0" y="108.800" width="231" height="2.400" fill="#1575d9"/>
<rect x="2" y="87.900" width="227" height="1.700" fill="#7a9bc6"/><rect x="2" y="89.600" width="227" height="1" fill="#03234d"/>
<g fill="none" stroke="#e8eef8" stroke-width="1.100"><rect x="4.500" y="5.500" width="9" height="7.200" rx="1"/><path d="M13.500 8L17.300 5.800V12.400L13.500 10.200"/></g>
</svg>
<span class="t" style="transform:scaleX(0.9143);left:24.97px;top:4.500px;font-size:11.500px;color:#fff">４条・５条</span>
</div>
<svg style="left:120px;top:37px" width="7" height="13" viewBox="0 0 7 13"><path d="M0 0.500Q0 0 1 0H5Q6 0 6 1V5.500L1 12.500H0Z" fill="#d01f26"/></svg>
<div class="abs" style="left:120px;top:39px;width:1.300px;height:413px;background:#d42a30"></div>
<div class="abs" style="left:1888px;top:85px;width:9px;height:367px;background:#0f0f11"></div>
<div class="abs" style="left:1893px;top:82px;width:8px;height:368px;border-radius:4px;background:#4a4c5b"></div>
<div class="abs" style="left:0;top:452px;width:1897px;height:6px;background:#181a19"></div>
<div class="abs" style="left:0;top:456.6px;width:1897px;height:1.400px;background:#050506"></div>
<div class="abs" style="left:0;top:458px;width:1897px;height:23px;background:#1f1f23"></div>
<svg style="left:0.500px;top:464.6px" width="12" height="12" viewBox="0 0 12 12"><circle cx="6" cy="6" r="5.600" fill="#cfcfd2"/><rect x="2.300" y="5.450" width="7.400" height="1.100" fill="#1f1f23"/></svg>
<div class="abs" style="left:24px;top:470.1px;width:69px;height:1px;background:#85858c"></div>
<div class="abs" style="left:65.600px;top:465.4px;width:10.400px;height:10.400px;border-radius:50%;background:#cfcfd2"></div>
<svg style="left:104.500px;top:464.6px" width="12" height="12" viewBox="0 0 12 12"><circle cx="6" cy="6" r="5.600" fill="#cfcfd2"/><rect x="2.300" y="5.450" width="7.400" height="1.100" fill="#1f1f23"/><rect x="5.450" y="2.300" width="1.100" height="7.400" fill="#1f1f23"/></svg>
<div class="abs" style="left:120px;top:466.2px;width:1770px;height:8px;border-radius:4px;background:#2e3038"></div>
<div class="abs" style="left:120px;top:466.2px;width:56px;height:8px;border-radius:4px;background:#4c4f5e"></div>
</div>
</body>
</html>
